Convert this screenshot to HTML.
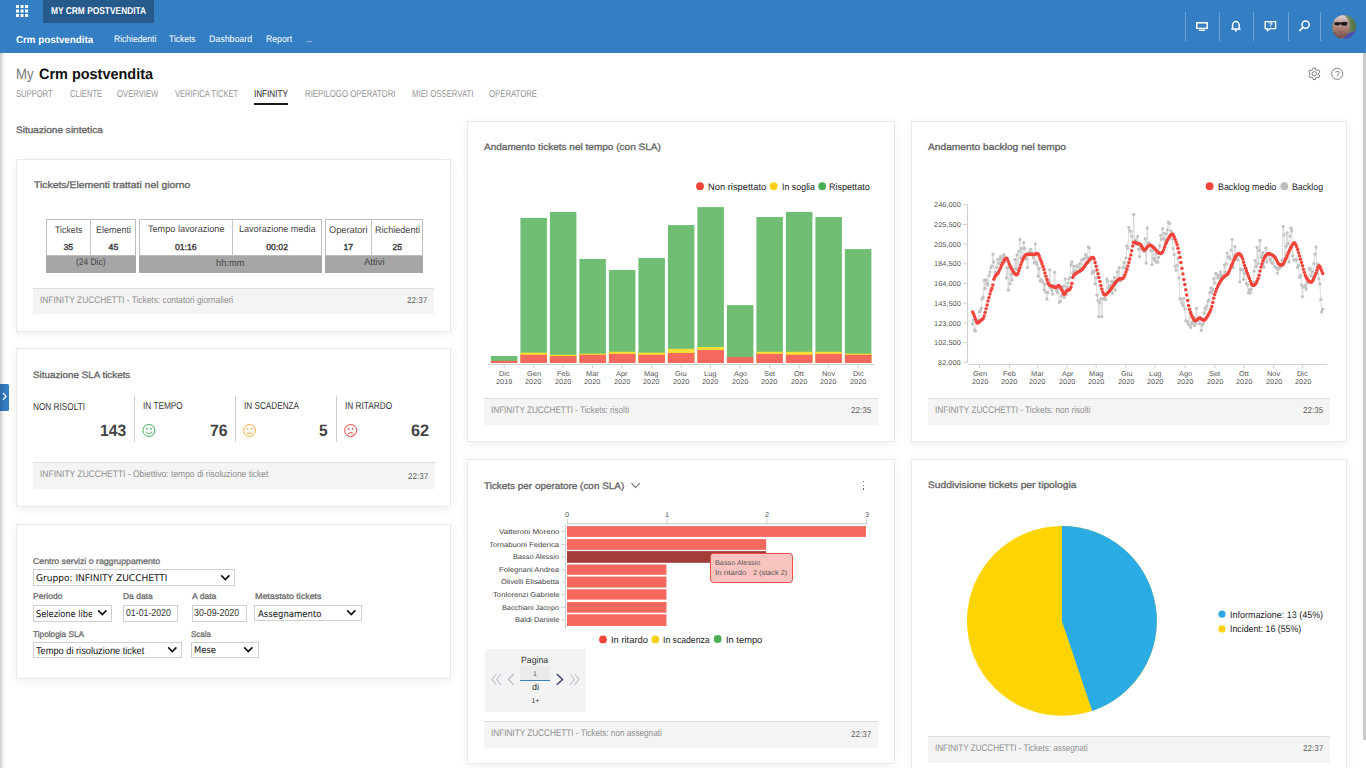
<!DOCTYPE html>
<html lang="it"><head><meta charset="utf-8"><title>My Crm postvendita</title>
<style>
html,body{margin:0;padding:0;width:1366px;height:768px;overflow:hidden;background:#fff}
body{position:relative;font-family:"Liberation Sans",sans-serif;text-rendering:geometricPrecision}
.b{position:absolute;display:block}
.t{position:absolute;white-space:pre;transform-origin:0 50%;display:block}
</style></head><body>
<div class="b" style="left:0.00px;top:0.00px;width:1366.00px;height:53.00px;background:#347ec3;"></div>
<div class="b" style="left:43.00px;top:0.00px;width:111.00px;height:23.00px;background:#265a8b;"></div>
<svg class="b" style="left:14px;top:3px" width="18" height="18" viewBox="14 3 18 18" fill="#fff"><rect x="16.00" y="5.00" width="3" height="3.05"/><rect x="16.00" y="9.50" width="3" height="3.05"/><rect x="16.00" y="14.00" width="3" height="3.05"/><rect x="20.55" y="5.00" width="3" height="3.05"/><rect x="20.55" y="9.50" width="3" height="3.05"/><rect x="20.55" y="14.00" width="3" height="3.05"/><rect x="25.10" y="5.00" width="3" height="3.05"/><rect x="25.10" y="9.50" width="3" height="3.05"/><rect x="25.10" y="14.00" width="3" height="3.05"/></svg>
<span class="t" style="left:50.80px;top:4.00px;height:15px;line-height:15px;font-size:10px;color:#fff;font-weight:700;transform:scaleX(0.8377);">MY CRM POSTVENDITA</span>
<span class="t" style="left:16.10px;top:33.00px;height:15px;line-height:15px;font-size:10px;color:#fff;font-weight:700;transform:scaleX(0.9771);">Crm postvendita</span>
<span class="t" style="left:113.70px;top:33.00px;height:14px;line-height:14px;font-size:9.5px;color:#fff;transform:scaleX(0.9000);">Richiedenti</span>
<span class="t" style="left:169.30px;top:33.00px;height:14px;line-height:14px;font-size:9.5px;color:#fff;transform:scaleX(0.8946);">Tickets</span>
<span class="t" style="left:209.00px;top:33.00px;height:14px;line-height:14px;font-size:9.5px;color:#fff;transform:scaleX(0.9272);">Dashboard</span>
<span class="t" style="left:265.80px;top:33.00px;height:14px;line-height:14px;font-size:9.5px;color:#fff;transform:scaleX(0.9153);">Report</span>
<span class="t" style="left:305.60px;top:33.00px;height:14px;line-height:14px;font-size:9.5px;color:#fff;transform:scaleX(0.7574);">...</span>
<span class="t" style="left:16.40px;top:64.00px;height:21px;line-height:21px;font-size:15px;color:#787878;transform:scaleX(0.8800);">My</span>
<span class="t" style="left:39.10px;top:64.00px;height:21px;line-height:21px;font-size:15px;color:#111;font-weight:700;transform:scaleX(0.9632);">Crm postvendita</span>
<span class="t" style="left:16.40px;top:87.00px;height:15px;line-height:15px;font-size:10px;color:#949494;transform:scaleX(0.7598);">SUPPORT</span>
<span class="t" style="left:69.70px;top:87.00px;height:15px;line-height:15px;font-size:10px;color:#949494;transform:scaleX(0.7624);">CLIENTE</span>
<span class="t" style="left:117.40px;top:87.00px;height:15px;line-height:15px;font-size:10px;color:#949494;transform:scaleX(0.7707);">OVERVIEW</span>
<span class="t" style="left:174.60px;top:87.00px;height:15px;line-height:15px;font-size:10px;color:#949494;transform:scaleX(0.7548);">VERIFICA TICKET</span>
<span class="t" style="left:254.20px;top:87.00px;height:15px;line-height:15px;font-size:10px;color:#222;transform:scaleX(0.8111);">INFINITY</span>
<span class="t" style="left:304.50px;top:87.00px;height:15px;line-height:15px;font-size:10px;color:#949494;transform:scaleX(0.7816);">RIEPILOGO OPERATORI</span>
<span class="t" style="left:411.50px;top:87.00px;height:15px;line-height:15px;font-size:10px;color:#949494;transform:scaleX(0.7794);">MIEI OSSERVATI</span>
<span class="t" style="left:489.00px;top:87.00px;height:15px;line-height:15px;font-size:10px;color:#949494;transform:scaleX(0.7758);">OPERATORE</span>
<div class="b" style="left:254.00px;top:102.60px;width:34.20px;height:2.00px;background:#1a1a1a;"></div>
<span class="t" style="left:16.40px;top:123.00px;height:14px;line-height:14px;font-size:9.3px;color:#666;-webkit-text-stroke:0.32px currentColor;transform:scaleX(1.0835);">Situazione sintetica</span>
<div class="b" style="left:1363.00px;top:53.00px;width:3.00px;height:687.00px;background:#cbcbcb;"></div>
<div class="b" style="left:0;top:53px;width:6px;height:715px;background:linear-gradient(to right,#c6c6c6 0,#e2e2e2 30%,#f6f6f6 65%,#fff 100%)"></div>
<div class="b" style="left:0;top:383.6px;width:8.8px;height:27.1px;border-radius:0 1.5px 1.5px 0;background:linear-gradient(to right,#2b6aab,#347ec3 70%)"></div>
<svg class="b" style="left:1px;top:391px" width="7" height="11" viewBox="0 0 7 11"><path d="M2 2 L5 5.4 L2 8.8" fill="none" stroke="#fff" stroke-width="1.25"/></svg>
<div class="b" style="left:16.00px;top:159.00px;width:435.00px;height:172.50px;background:#fff;border:1px solid #e9e9e9;box-shadow:0 2px 9px rgba(0,0,0,.065);box-sizing:border-box"></div>
<span class="t" style="left:33.50px;top:178.00px;height:14px;line-height:14px;font-size:9.3px;color:#666;-webkit-text-stroke:0.32px currentColor;transform:scaleX(1.1189);">Tickets/Elementi trattati nel giorno</span>
<div class="b" style="left:46.00px;top:219.00px;width:90.20px;height:37.00px;background:#fff;border:1px solid #bdbdbd;box-sizing:border-box"></div>
<div class="b" style="left:90.10px;top:219.00px;width:1.00px;height:37.00px;background:#c4c4c4;"></div>
<div class="b" style="left:46.00px;top:255.50px;width:90.20px;height:17.00px;background:#a6a6a6;"></div>
<span class="t" style="left:54.55px;top:224.00px;height:14px;line-height:14px;font-size:9.5px;color:#444;transform:scaleX(0.9249);">Tickets</span>
<span class="t" style="left:95.90px;top:224.00px;height:14px;line-height:14px;font-size:9.5px;color:#444;transform:scaleX(0.9467);">Elementi</span>
<span class="t" style="left:63.48px;top:241.00px;height:13px;line-height:13px;font-size:8.66px;color:#3c3c3c;-webkit-text-stroke:0.38px currentColor;">35</span>
<span class="t" style="left:108.58px;top:241.00px;height:13px;line-height:13px;font-size:8.66px;color:#3c3c3c;-webkit-text-stroke:0.38px currentColor;">45</span>
<span class="t" style="left:76.35px;top:256.00px;height:14px;line-height:14px;font-size:9.5px;color:#444;transform:scaleX(0.8868);">(24 Dic)</span>
<div class="b" style="left:139.00px;top:219.00px;width:182.80px;height:37.00px;background:#fff;border:1px solid #bdbdbd;box-sizing:border-box"></div>
<div class="b" style="left:232.00px;top:219.00px;width:1.00px;height:37.00px;background:#c4c4c4;"></div>
<div class="b" style="left:139.00px;top:255.50px;width:182.80px;height:17.00px;background:#a6a6a6;"></div>
<span class="t" style="left:147.50px;top:223.00px;height:14px;line-height:14px;font-size:9.5px;color:#444;transform:scaleX(0.9592);">Tempo lavorazione</span>
<span class="t" style="left:238.90px;top:223.00px;height:14px;line-height:14px;font-size:9.5px;color:#444;transform:scaleX(0.9529);">Lavorazione media</span>
<span class="t" style="left:174.91px;top:241.00px;height:13px;line-height:13px;font-size:8.66px;color:#3c3c3c;-webkit-text-stroke:0.38px currentColor;">01:16</span>
<span class="t" style="left:266.31px;top:241.00px;height:13px;line-height:13px;font-size:8.66px;color:#3c3c3c;-webkit-text-stroke:0.38px currentColor;">00:02</span>
<span class="t" style="left:216.15px;top:257.00px;height:14px;line-height:14px;font-size:9.5px;color:#444;transform:scaleX(0.9812);">hh:mm</span>
<div class="b" style="left:325.20px;top:219.00px;width:97.80px;height:37.00px;background:#fff;border:1px solid #bdbdbd;box-sizing:border-box"></div>
<div class="b" style="left:371.00px;top:219.00px;width:1.00px;height:37.00px;background:#c4c4c4;"></div>
<div class="b" style="left:325.20px;top:255.50px;width:97.80px;height:17.00px;background:#a6a6a6;"></div>
<span class="t" style="left:329.10px;top:224.00px;height:14px;line-height:14px;font-size:9.5px;color:#444;transform:scaleX(0.9720);">Operatori</span>
<span class="t" style="left:374.75px;top:224.00px;height:14px;line-height:14px;font-size:9.5px;color:#444;transform:scaleX(0.9574);">Richiedenti</span>
<span class="t" style="left:343.53px;top:241.00px;height:13px;line-height:13px;font-size:8.66px;color:#3c3c3c;-webkit-text-stroke:0.38px currentColor;">17</span>
<span class="t" style="left:392.43px;top:241.00px;height:13px;line-height:13px;font-size:8.66px;color:#3c3c3c;-webkit-text-stroke:0.38px currentColor;">25</span>
<span class="t" style="left:363.85px;top:256.00px;height:14px;line-height:14px;font-size:9.5px;color:#444;transform:scaleX(0.9954);">Attivi</span>
<div class="b" style="left:33.00px;top:288.00px;width:401.00px;height:25.80px;background:#f4f4f4;border-top:1px solid #dcdcdc;box-sizing:border-box"></div>
<span class="t" style="left:40.00px;top:294.00px;height:14px;line-height:14px;font-size:9.5px;color:#8f8f8f;transform:scaleX(0.8804);">INFINITY ZUCCHETTI - Tickets: contatori giornalieri</span>
<span class="t" style="left:406.90px;top:294.00px;height:13px;line-height:13px;font-size:8.5px;color:#5a5a5a;transform:scaleX(0.9492);">22:37</span>
<div class="b" style="left:16.00px;top:348.00px;width:435.00px;height:158.50px;background:#fff;border:1px solid #e9e9e9;box-shadow:0 2px 9px rgba(0,0,0,.065);box-sizing:border-box"></div>
<span class="t" style="left:33.20px;top:368.00px;height:14px;line-height:14px;font-size:9.3px;color:#666;-webkit-text-stroke:0.32px currentColor;transform:scaleX(1.0576);">Situazione SLA tickets</span>
<span class="t" style="left:33.20px;top:400.00px;height:15px;line-height:15px;font-size:10px;color:#333;transform:scaleX(0.8249);">NON RISOLTI</span>
<span class="t" style="left:143.40px;top:399.00px;height:15px;line-height:15px;font-size:10px;color:#333;transform:scaleX(0.8244);">IN TEMPO</span>
<span class="t" style="left:243.70px;top:399.00px;height:15px;line-height:15px;font-size:10px;color:#333;transform:scaleX(0.8180);">IN SCADENZA</span>
<span class="t" style="left:344.60px;top:399.00px;height:15px;line-height:15px;font-size:10px;color:#333;transform:scaleX(0.8274);">IN RITARDO</span>
<span class="t" style="left:99.90px;top:420.00px;height:23px;line-height:23px;font-size:16.5px;color:#444;font-weight:700;transform:scaleX(0.9516);">143</span>
<span class="t" style="left:209.60px;top:420.00px;height:23px;line-height:23px;font-size:16.5px;color:#444;font-weight:700;transform:scaleX(0.9586);">76</span>
<span class="t" style="left:319.30px;top:420.00px;height:23px;line-height:23px;font-size:16.5px;color:#444;font-weight:700;transform:scaleX(0.9361);">5</span>
<span class="t" style="left:410.80px;top:420.00px;height:23px;line-height:23px;font-size:16.5px;color:#444;font-weight:700;transform:scaleX(0.9913);">62</span>
<div class="b" style="left:134.00px;top:396.00px;width:1.00px;height:45.60px;background:#cfcfcf;"></div>
<div class="b" style="left:234.90px;top:396.00px;width:1.00px;height:45.60px;background:#cfcfcf;"></div>
<div class="b" style="left:336.10px;top:396.00px;width:1.00px;height:45.60px;background:#cfcfcf;"></div>
<svg class="b" style="left:0;top:0" width="460" height="520" viewBox="0 0 460 520"><g fill="none" stroke="#43a95a" stroke-width="1"><circle cx="148.9" cy="430.5" r="6.0"/><path d="M145.7 431.8 Q148.9 435.9 152.1 431.8" /></g><circle cx="146.8" cy="428.8" r="0.85" fill="#43a95a"/><circle cx="151.0" cy="428.8" r="0.85" fill="#43a95a"/><g fill="none" stroke="#fbab38" stroke-width="1"><circle cx="249.5" cy="430.5" r="6.0"/><path d="M246.7 433.1 H252.3" /></g><circle cx="247.4" cy="428.8" r="0.85" fill="#fbab38"/><circle cx="251.6" cy="428.8" r="0.85" fill="#fbab38"/><g fill="none" stroke="#f0473e" stroke-width="1"><circle cx="350.7" cy="430.5" r="6.0"/><path d="M347.7 434.3 Q350.7 430.7 353.7 434.3" /></g><circle cx="348.6" cy="428.8" r="0.85" fill="#f0473e"/><circle cx="352.8" cy="428.8" r="0.85" fill="#f0473e"/></svg>
<div class="b" style="left:33.00px;top:462.00px;width:402.00px;height:26.70px;background:#f4f4f4;border-top:1px solid #dcdcdc;box-sizing:border-box"></div>
<span class="t" style="left:40.00px;top:468.00px;height:14px;line-height:14px;font-size:9.5px;color:#8f8f8f;transform:scaleX(0.8908);">INFINITY ZUCCHETTI - Obiettivo: tempo di risoluzione ticket</span>
<span class="t" style="left:407.90px;top:470.00px;height:13px;line-height:13px;font-size:8.5px;color:#5a5a5a;transform:scaleX(0.9492);">22:37</span>
<div class="b" style="left:16.00px;top:523.50px;width:435.00px;height:155.00px;background:#fff;border:1px solid #e9e9e9;box-shadow:0 2px 9px rgba(0,0,0,.065);box-sizing:border-box"></div>
<span class="t" style="left:33.10px;top:555.00px;height:13px;line-height:13px;font-size:8.3px;color:#707070;-webkit-text-stroke:0.32px currentColor;transform:scaleX(1.0511);">Centro servizi o raggruppamento</span>
<div class="b" style="left:33.00px;top:569.40px;width:201.80px;height:16.40px;background:#fff;border:1px solid #cfcfcf;box-sizing:border-box"></div>
<span class="t" style="left:36.30px;top:572.00px;height:14px;line-height:14px;font-size:9.3px;color:#111;font-family:'DejaVu Sans', 'Liberation Sans', sans-serif;transform:scaleX(0.9723);">Gruppo: INFINITY ZUCCHETTI</span>
<svg class="b" style="left:219.60px;top:573.60px" width="11" height="8" viewBox="0 0 11 8"><path d="M1.2 1.4 L5.3 5.5 L9.4 1.4" fill="none" stroke="#111" stroke-width="1.7"/></svg>
<span class="t" style="left:33.10px;top:590.00px;height:13px;line-height:13px;font-size:8.3px;color:#707070;-webkit-text-stroke:0.32px currentColor;transform:scaleX(1.0311);">Periodo</span>
<span class="t" style="left:123.20px;top:590.00px;height:13px;line-height:13px;font-size:8.3px;color:#707070;-webkit-text-stroke:0.32px currentColor;transform:scaleX(1.0219);">Da data</span>
<span class="t" style="left:191.70px;top:590.00px;height:13px;line-height:13px;font-size:8.3px;color:#707070;-webkit-text-stroke:0.32px currentColor;transform:scaleX(1.0369);">A data</span>
<span class="t" style="left:254.60px;top:590.00px;height:13px;line-height:13px;font-size:8.3px;color:#707070;-webkit-text-stroke:0.32px currentColor;transform:scaleX(1.0680);">Metastato tickets</span>
<div class="b" style="left:33.00px;top:605.20px;width:78.90px;height:16.40px;background:#fff;border:1px solid #cfcfcf;box-sizing:border-box"></div>
<span class="t" style="left:36.30px;top:608.00px;height:14px;line-height:14px;font-size:9.3px;color:#111;font-family:'DejaVu Sans', 'Liberation Sans', sans-serif;transform:scaleX(0.8861);clip-path:inset(0 1px 0 0);">Selezione libe</span>
<svg class="b" style="left:96.60px;top:609.40px" width="11" height="8" viewBox="0 0 11 8"><path d="M1.2 1.4 L5.3 5.5 L9.4 1.4" fill="none" stroke="#111" stroke-width="1.7"/></svg>
<div class="b" style="left:123.20px;top:605.20px;width:54.70px;height:16.40px;background:#fff;border:1px solid #cfcfcf;box-sizing:border-box"></div>
<span class="t" style="left:125.60px;top:606.00px;height:15px;line-height:15px;font-size:10px;color:#333;transform:scaleX(0.8757);">01-01-2020</span>
<div class="b" style="left:192.00px;top:605.20px;width:54.60px;height:16.40px;background:#fff;border:1px solid #cfcfcf;box-sizing:border-box"></div>
<span class="t" style="left:194.30px;top:606.00px;height:15px;line-height:15px;font-size:10px;color:#333;transform:scaleX(0.8816);">30-09-2020</span>
<div class="b" style="left:254.20px;top:605.20px;width:107.60px;height:16.30px;background:#fff;border:1px solid #cfcfcf;box-sizing:border-box"></div>
<span class="t" style="left:257.50px;top:608.00px;height:14px;line-height:14px;font-size:9.3px;color:#111;font-family:'DejaVu Sans', 'Liberation Sans', sans-serif;transform:scaleX(0.9182);">Assegnamento</span>
<svg class="b" style="left:346.40px;top:609.40px" width="11" height="8" viewBox="0 0 11 8"><path d="M1.2 1.4 L5.3 5.5 L9.4 1.4" fill="none" stroke="#111" stroke-width="1.7"/></svg>
<span class="t" style="left:33.10px;top:628.00px;height:13px;line-height:13px;font-size:8.3px;color:#707070;-webkit-text-stroke:0.32px currentColor;transform:scaleX(0.9930);">Tipologia SLA</span>
<span class="t" style="left:191.20px;top:628.00px;height:13px;line-height:13px;font-size:8.3px;color:#707070;-webkit-text-stroke:0.32px currentColor;transform:scaleX(0.9535);">Scala</span>
<div class="b" style="left:33.00px;top:642.20px;width:148.70px;height:15.40px;background:#fff;border:1px solid #cfcfcf;box-sizing:border-box"></div>
<span class="t" style="left:36.30px;top:644.00px;height:15px;line-height:15px;font-size:10px;color:#111;transform:scaleX(0.9234);">Tempo di risoluzione ticket</span>
<svg class="b" style="left:166.50px;top:646.00px" width="11" height="8" viewBox="0 0 11 8"><path d="M1.2 1.4 L5.3 5.5 L9.4 1.4" fill="none" stroke="#111" stroke-width="1.7"/></svg>
<div class="b" style="left:191.00px;top:642.20px;width:67.70px;height:15.40px;background:#fff;border:1px solid #cfcfcf;box-sizing:border-box"></div>
<span class="t" style="left:194.30px;top:644.00px;height:14px;line-height:14px;font-size:9.3px;color:#111;font-family:'DejaVu Sans', 'Liberation Sans', sans-serif;transform:scaleX(0.9008);">Mese</span>
<svg class="b" style="left:243.40px;top:646.00px" width="11" height="8" viewBox="0 0 11 8"><path d="M1.2 1.4 L5.3 5.5 L9.4 1.4" fill="none" stroke="#111" stroke-width="1.7"/></svg>
<div class="b" style="left:467.00px;top:121.00px;width:428.00px;height:320.50px;background:#fff;border:1px solid #e9e9e9;box-shadow:0 2px 9px rgba(0,0,0,.065);box-sizing:border-box"></div>
<span class="t" style="left:484.00px;top:140.00px;height:14px;line-height:14px;font-size:9.3px;color:#666;-webkit-text-stroke:0.32px currentColor;transform:scaleX(1.0793);">Andamento tickets nel tempo (con SLA)</span>
<svg class="b" style="left:467px;top:121px" width="428" height="321" viewBox="467 121 428 321"><circle cx="700.0" cy="186.2" r="3.9" fill="#f1433a"/><circle cx="773.7" cy="186.2" r="3.9" fill="#fdd017"/><circle cx="822.2" cy="186.2" r="3.9" fill="#4cae52"/><path d="M488 364.5 H874.5" stroke="#cfcfcf" stroke-width="1.1" fill="none"/><rect x="490.90" y="356.00" width="26.5" height="7.00" fill="#70be74"/><rect x="490.90" y="360.80" width="26.5" height="2.20" fill="#f4685d"/><path d="M504.15 364.5 V368" stroke="#cfcfcf" stroke-width="1"/><rect x="520.40" y="217.90" width="26.5" height="145.10" fill="#70be74"/><rect x="520.40" y="352.70" width="26.5" height="10.30" fill="#fedf33"/><rect x="520.40" y="354.80" width="26.5" height="8.20" fill="#f4685d"/><path d="M533.65 364.5 V368" stroke="#cfcfcf" stroke-width="1"/><rect x="549.90" y="211.90" width="26.5" height="151.10" fill="#70be74"/><rect x="549.90" y="354.80" width="26.5" height="8.20" fill="#fedf33"/><rect x="549.90" y="356.00" width="26.5" height="7.00" fill="#f4685d"/><path d="M563.15 364.5 V368" stroke="#cfcfcf" stroke-width="1"/><rect x="579.40" y="259.00" width="26.5" height="104.00" fill="#70be74"/><rect x="579.40" y="353.60" width="26.5" height="9.40" fill="#fedf33"/><rect x="579.40" y="354.80" width="26.5" height="8.20" fill="#f4685d"/><path d="M592.65 364.5 V368" stroke="#cfcfcf" stroke-width="1"/><rect x="608.90" y="270.00" width="26.5" height="93.00" fill="#70be74"/><rect x="608.90" y="351.80" width="26.5" height="11.20" fill="#fedf33"/><rect x="608.90" y="353.90" width="26.5" height="9.10" fill="#f4685d"/><path d="M622.15 364.5 V368" stroke="#cfcfcf" stroke-width="1"/><rect x="638.40" y="258.00" width="26.5" height="105.00" fill="#70be74"/><rect x="638.40" y="352.70" width="26.5" height="10.30" fill="#fedf33"/><rect x="638.40" y="354.80" width="26.5" height="8.20" fill="#f4685d"/><path d="M651.65 364.5 V368" stroke="#cfcfcf" stroke-width="1"/><rect x="667.90" y="225.10" width="26.5" height="137.90" fill="#70be74"/><rect x="667.90" y="348.80" width="26.5" height="14.20" fill="#fedf33"/><rect x="667.90" y="353.00" width="26.5" height="10.00" fill="#f4685d"/><path d="M681.15 364.5 V368" stroke="#cfcfcf" stroke-width="1"/><rect x="697.40" y="207.10" width="26.5" height="155.90" fill="#70be74"/><rect x="697.40" y="347.00" width="26.5" height="16.00" fill="#fedf33"/><rect x="697.40" y="350.00" width="26.5" height="13.00" fill="#f4685d"/><path d="M710.65 364.5 V368" stroke="#cfcfcf" stroke-width="1"/><rect x="726.90" y="305.10" width="26.5" height="57.90" fill="#70be74"/><rect x="726.90" y="357.20" width="26.5" height="5.80" fill="#f4685d"/><path d="M740.15 364.5 V368" stroke="#cfcfcf" stroke-width="1"/><rect x="756.40" y="217.00" width="26.5" height="146.00" fill="#70be74"/><rect x="756.40" y="351.80" width="26.5" height="11.20" fill="#fedf33"/><rect x="756.40" y="353.90" width="26.5" height="9.10" fill="#f4685d"/><path d="M769.65 364.5 V368" stroke="#cfcfcf" stroke-width="1"/><rect x="785.90" y="211.90" width="26.5" height="151.10" fill="#70be74"/><rect x="785.90" y="351.80" width="26.5" height="11.20" fill="#fedf33"/><rect x="785.90" y="354.80" width="26.5" height="8.20" fill="#f4685d"/><path d="M799.15 364.5 V368" stroke="#cfcfcf" stroke-width="1"/><rect x="815.40" y="217.00" width="26.5" height="146.00" fill="#70be74"/><rect x="815.40" y="351.80" width="26.5" height="11.20" fill="#fedf33"/><rect x="815.40" y="353.90" width="26.5" height="9.10" fill="#f4685d"/><path d="M828.65 364.5 V368" stroke="#cfcfcf" stroke-width="1"/><rect x="844.90" y="249.10" width="26.5" height="113.90" fill="#70be74"/><rect x="844.90" y="353.60" width="26.5" height="9.40" fill="#fedf33"/><rect x="844.90" y="354.80" width="26.5" height="8.20" fill="#f4685d"/><path d="M858.15 364.5 V368" stroke="#cfcfcf" stroke-width="1"/></svg>
<span class="t" style="left:498.78px;top:369.00px;height:11px;line-height:11px;font-size:7px;color:#555;transform:scaleX(1.0600);">Dic</span>
<span class="t" style="left:495.97px;top:377.00px;height:11px;line-height:11px;font-size:7px;color:#555;transform:scaleX(1.0500);">2019</span>
<span class="t" style="left:526.64px;top:369.00px;height:11px;line-height:11px;font-size:7px;color:#555;transform:scaleX(1.0600);">Gen</span>
<span class="t" style="left:525.47px;top:377.00px;height:11px;line-height:11px;font-size:7px;color:#555;transform:scaleX(1.0500);">2020</span>
<span class="t" style="left:556.76px;top:369.00px;height:11px;line-height:11px;font-size:7px;color:#555;transform:scaleX(1.0600);">Feb</span>
<span class="t" style="left:554.97px;top:377.00px;height:11px;line-height:11px;font-size:7px;color:#555;transform:scaleX(1.0500);">2020</span>
<span class="t" style="left:586.26px;top:369.00px;height:11px;line-height:11px;font-size:7px;color:#555;transform:scaleX(1.0600);">Mar</span>
<span class="t" style="left:584.47px;top:377.00px;height:11px;line-height:11px;font-size:7px;color:#555;transform:scaleX(1.0500);">2020</span>
<span class="t" style="left:616.37px;top:369.00px;height:11px;line-height:11px;font-size:7px;color:#555;transform:scaleX(1.0600);">Apr</span>
<span class="t" style="left:613.97px;top:377.00px;height:11px;line-height:11px;font-size:7px;color:#555;transform:scaleX(1.0500);">2020</span>
<span class="t" style="left:644.43px;top:369.00px;height:11px;line-height:11px;font-size:7px;color:#555;transform:scaleX(1.0600);">Mag</span>
<span class="t" style="left:643.47px;top:377.00px;height:11px;line-height:11px;font-size:7px;color:#555;transform:scaleX(1.0500);">2020</span>
<span class="t" style="left:675.37px;top:369.00px;height:11px;line-height:11px;font-size:7px;color:#555;transform:scaleX(1.0600);">Giu</span>
<span class="t" style="left:672.97px;top:377.00px;height:11px;line-height:11px;font-size:7px;color:#555;transform:scaleX(1.0500);">2020</span>
<span class="t" style="left:704.46px;top:369.00px;height:11px;line-height:11px;font-size:7px;color:#555;transform:scaleX(1.0600);">Lug</span>
<span class="t" style="left:702.47px;top:377.00px;height:11px;line-height:11px;font-size:7px;color:#555;transform:scaleX(1.0500);">2020</span>
<span class="t" style="left:733.54px;top:369.00px;height:11px;line-height:11px;font-size:7px;color:#555;transform:scaleX(1.0600);">Ago</span>
<span class="t" style="left:731.97px;top:377.00px;height:11px;line-height:11px;font-size:7px;color:#555;transform:scaleX(1.0500);">2020</span>
<span class="t" style="left:764.08px;top:369.00px;height:11px;line-height:11px;font-size:7px;color:#555;transform:scaleX(1.0600);">Set</span>
<span class="t" style="left:761.47px;top:377.00px;height:11px;line-height:11px;font-size:7px;color:#555;transform:scaleX(1.0500);">2020</span>
<span class="t" style="left:794.20px;top:369.00px;height:11px;line-height:11px;font-size:7px;color:#555;transform:scaleX(1.0600);">Ott</span>
<span class="t" style="left:790.97px;top:377.00px;height:11px;line-height:11px;font-size:7px;color:#555;transform:scaleX(1.0500);">2020</span>
<span class="t" style="left:822.05px;top:369.00px;height:11px;line-height:11px;font-size:7px;color:#555;transform:scaleX(1.0600);">Nov</span>
<span class="t" style="left:820.47px;top:377.00px;height:11px;line-height:11px;font-size:7px;color:#555;transform:scaleX(1.0500);">2020</span>
<span class="t" style="left:852.78px;top:369.00px;height:11px;line-height:11px;font-size:7px;color:#555;transform:scaleX(1.0600);">Dic</span>
<span class="t" style="left:849.97px;top:377.00px;height:11px;line-height:11px;font-size:7px;color:#555;transform:scaleX(1.0500);">2020</span>
<span class="t" style="left:708.30px;top:181.00px;height:14px;line-height:14px;font-size:9.5px;color:#222;transform:scaleX(0.9838);">Non rispettato</span>
<span class="t" style="left:782.00px;top:181.00px;height:14px;line-height:14px;font-size:9.5px;color:#222;transform:scaleX(0.9325);">In soglia</span>
<span class="t" style="left:829.40px;top:181.00px;height:14px;line-height:14px;font-size:9.5px;color:#222;transform:scaleX(0.9514);">Rispettato</span>
<div class="b" style="left:484.00px;top:398.00px;width:394.00px;height:26.70px;background:#f4f4f4;border-top:1px solid #dcdcdc;box-sizing:border-box"></div>
<span class="t" style="left:491.00px;top:404.00px;height:14px;line-height:14px;font-size:9.5px;color:#8f8f8f;transform:scaleX(0.8553);">INFINITY ZUCCHETTI - Tickets: risolti</span>
<span class="t" style="left:850.90px;top:404.00px;height:13px;line-height:13px;font-size:8.5px;color:#5a5a5a;transform:scaleX(0.9492);">22:35</span>
<div class="b" style="left:911.00px;top:121.00px;width:436.00px;height:320.50px;background:#fff;border:1px solid #e9e9e9;box-shadow:0 2px 9px rgba(0,0,0,.065);box-sizing:border-box"></div>
<span class="t" style="left:928.00px;top:140.00px;height:14px;line-height:14px;font-size:9.3px;color:#666;-webkit-text-stroke:0.32px currentColor;transform:scaleX(1.0988);">Andamento backlog nel tempo</span>
<svg class="b" style="left:911px;top:121px" width="436" height="321" viewBox="911 121 436 321"><circle cx="1209.6" cy="186.2" r="3.9" fill="#f1433a"/><circle cx="1284.3" cy="186.2" r="3.9" fill="#bdbdbd"/><path d="M967.5 204.2 V362.8 M969 364.5 H1327" stroke="#cfcfcf" stroke-width="1.1" fill="none"/><path d="M963 204.70 H967.5" stroke="#cfcfcf" stroke-width="1"/><path d="M963 224.39 H967.5" stroke="#cfcfcf" stroke-width="1"/><path d="M963 244.08 H967.5" stroke="#cfcfcf" stroke-width="1"/><path d="M963 263.77 H967.5" stroke="#cfcfcf" stroke-width="1"/><path d="M963 283.46 H967.5" stroke="#cfcfcf" stroke-width="1"/><path d="M963 303.15 H967.5" stroke="#cfcfcf" stroke-width="1"/><path d="M963 322.84 H967.5" stroke="#cfcfcf" stroke-width="1"/><path d="M963 342.53 H967.5" stroke="#cfcfcf" stroke-width="1"/><path d="M963 362.22 H967.5" stroke="#cfcfcf" stroke-width="1"/><path d="M979.50 364.5 V368" stroke="#cfcfcf" stroke-width="1"/><path d="M1009.40 364.5 V368" stroke="#cfcfcf" stroke-width="1"/><path d="M1037.37 364.5 V368" stroke="#cfcfcf" stroke-width="1"/><path d="M1067.27 364.5 V368" stroke="#cfcfcf" stroke-width="1"/><path d="M1096.20 364.5 V368" stroke="#cfcfcf" stroke-width="1"/><path d="M1126.10 364.5 V368" stroke="#cfcfcf" stroke-width="1"/><path d="M1155.04 364.5 V368" stroke="#cfcfcf" stroke-width="1"/><path d="M1184.94 364.5 V368" stroke="#cfcfcf" stroke-width="1"/><path d="M1214.84 364.5 V368" stroke="#cfcfcf" stroke-width="1"/><path d="M1243.77 364.5 V368" stroke="#cfcfcf" stroke-width="1"/><path d="M1273.67 364.5 V368" stroke="#cfcfcf" stroke-width="1"/><path d="M1302.61 364.5 V368" stroke="#cfcfcf" stroke-width="1"/><path d="M972.6 323.9 L973.6 319.9 L974.5 330.0 L975.5 331.0 L976.5 320.6 L977.4 320.0 L978.4 320.7 L979.4 311.9 L980.3 311.0 L981.3 308.3 L982.2 298.8 L983.2 296.8 L984.2 280.1 L985.1 288.7 L986.1 280.0 L987.1 283.2 L988.0 285.1 L989.0 275.7 L990.0 272.1 L990.9 267.8 L991.9 266.2 L992.9 254.0 L993.8 262.0 L994.8 277.4 L995.7 272.5 L996.7 267.5 L997.7 259.3 L998.6 263.5 L999.6 259.5 L1000.6 256.7 L1001.5 262.3 L1002.5 258.2 L1003.5 254.7 L1004.4 255.7 L1005.4 257.9 L1006.4 277.8 L1007.3 267.8 L1008.3 290.0 L1009.3 267.2 L1010.2 283.8 L1011.2 274.3 L1012.1 280.1 L1013.1 269.5 L1014.1 271.8 L1015.0 259.3 L1016.0 268.5 L1017.0 254.8 L1017.9 269.7 L1018.9 251.3 L1019.9 239.5 L1020.8 258.0 L1021.8 248.4 L1022.8 259.5 L1023.7 242.7 L1024.7 248.4 L1025.6 256.0 L1026.6 258.9 L1027.6 267.6 L1028.5 252.7 L1029.5 253.3 L1030.5 249.1 L1031.4 252.0 L1032.4 253.3 L1033.4 257.6 L1034.3 263.0 L1035.3 243.8 L1036.3 262.3 L1037.2 265.0 L1038.2 276.3 L1039.2 268.5 L1040.1 281.0 L1041.1 279.8 L1042.0 281.0 L1043.0 282.1 L1044.0 289.9 L1044.9 284.5 L1045.9 292.3 L1046.9 299.2 L1047.8 292.7 L1048.8 280.4 L1049.8 269.9 L1050.7 287.7 L1051.7 290.5 L1052.7 294.1 L1053.6 285.6 L1054.6 272.4 L1055.5 286.6 L1056.5 290.5 L1057.5 292.8 L1058.4 287.5 L1059.4 302.2 L1060.4 301.2 L1061.3 295.8 L1062.3 287.1 L1063.3 286.2 L1064.2 297.5 L1065.2 278.9 L1066.2 294.3 L1067.1 286.8 L1068.1 282.9 L1069.0 278.8 L1070.0 277.5 L1071.0 265.0 L1071.9 262.0 L1072.9 273.0 L1073.9 266.2 L1074.8 270.6 L1075.8 273.4 L1076.8 266.0 L1077.7 266.5 L1078.7 271.5 L1079.7 263.7 L1080.6 268.9 L1081.6 259.9 L1082.6 269.0 L1083.5 258.6 L1084.5 259.1 L1085.4 254.7 L1086.4 257.7 L1087.4 256.9 L1088.3 246.8 L1089.3 247.8 L1090.3 259.0 L1091.2 257.6 L1092.2 273.3 L1093.2 271.2 L1094.1 271.7 L1095.1 284.0 L1096.1 277.7 L1097.0 295.2 L1098.0 300.4 L1098.9 316.8 L1099.9 302.8 L1100.9 298.8 L1101.8 316.6 L1102.8 298.6 L1103.8 299.0 L1104.7 298.7 L1105.7 299.5 L1106.7 279.0 L1107.6 281.4 L1108.6 287.9 L1109.6 285.5 L1110.5 285.5 L1111.5 281.1 L1112.5 293.1 L1113.4 282.1 L1114.4 277.5 L1115.3 290.1 L1116.3 282.8 L1117.3 271.9 L1118.2 280.2 L1119.2 267.7 L1120.2 281.1 L1121.1 279.8 L1122.1 278.7 L1123.1 267.3 L1124.0 262.5 L1125.0 267.8 L1126.0 257.8 L1126.9 245.9 L1127.9 248.4 L1128.8 227.3 L1129.8 231.0 L1130.8 231.3 L1131.7 236.2 L1132.7 242.3 L1133.7 214.5 L1134.6 243.0 L1135.6 240.1 L1136.6 244.7 L1137.5 236.4 L1138.5 249.1 L1139.5 256.6 L1140.4 248.9 L1141.4 246.6 L1142.4 248.8 L1143.3 251.0 L1144.3 251.7 L1145.2 238.8 L1146.2 263.2 L1147.2 228.0 L1148.1 243.2 L1149.1 243.2 L1150.1 245.6 L1151.0 250.7 L1152.0 264.6 L1153.0 249.9 L1153.9 258.4 L1154.9 260.8 L1155.9 253.9 L1156.8 262.3 L1157.8 262.0 L1158.7 257.4 L1159.7 245.9 L1160.7 235.4 L1161.6 239.4 L1162.6 228.6 L1163.6 238.7 L1164.5 233.4 L1165.5 241.3 L1166.5 233.9 L1167.4 230.0 L1168.4 222.1 L1169.4 223.3 L1170.3 235.9 L1171.3 231.1 L1172.3 238.8 L1173.2 248.6 L1174.2 254.6 L1175.1 266.3 L1176.1 270.3 L1177.1 265.3 L1178.0 258.5 L1179.0 278.0 L1180.0 298.7 L1180.9 299.4 L1181.9 302.9 L1182.9 305.7 L1183.8 298.3 L1184.8 308.8 L1185.8 320.8 L1186.7 321.1 L1187.7 322.4 L1188.6 324.8 L1189.6 310.3 L1190.6 327.6 L1191.5 324.2 L1192.5 322.0 L1193.5 317.2 L1194.4 325.5 L1195.4 323.7 L1196.4 308.4 L1197.3 320.3 L1198.3 318.7 L1199.3 323.6 L1200.2 318.4 L1201.2 330.5 L1202.2 325.0 L1203.1 323.4 L1204.1 313.0 L1205.0 308.0 L1206.0 309.1 L1207.0 305.8 L1207.9 301.4 L1208.9 300.1 L1209.9 292.5 L1210.8 287.9 L1211.8 293.0 L1212.8 289.7 L1213.7 278.6 L1214.7 283.1 L1215.7 273.5 L1216.6 274.1 L1217.6 277.9 L1218.5 275.5 L1219.5 277.6 L1220.5 272.0 L1221.4 275.0 L1222.4 277.7 L1223.4 275.5 L1224.3 265.0 L1225.3 272.1 L1226.3 264.0 L1227.2 253.1 L1228.2 257.3 L1229.2 256.9 L1230.1 258.9 L1231.1 250.1 L1232.1 239.6 L1233.0 267.4 L1234.0 255.1 L1234.9 246.6 L1235.9 259.5 L1236.9 254.2 L1237.8 259.8 L1238.8 254.3 L1239.8 281.8 L1240.7 269.5 L1241.7 269.7 L1242.7 269.8 L1243.6 279.3 L1244.6 273.1 L1245.6 272.6 L1246.5 283.5 L1247.5 284.9 L1248.4 292.8 L1249.4 289.4 L1250.4 292.9 L1251.3 289.7 L1252.3 283.7 L1253.3 282.5 L1254.2 271.1 L1255.2 260.7 L1256.2 266.5 L1257.1 247.3 L1258.1 263.6 L1259.1 250.7 L1260.0 240.5 L1261.0 257.6 L1262.0 255.6 L1262.9 252.6 L1263.9 267.2 L1264.8 257.5 L1265.8 248.1 L1266.8 262.0 L1267.7 253.3 L1268.7 255.1 L1269.7 259.7 L1270.6 258.9 L1271.6 262.5 L1272.6 263.4 L1273.5 256.5 L1274.5 266.6 L1275.5 266.8 L1276.4 268.2 L1277.4 273.1 L1278.3 269.3 L1279.3 267.0 L1280.3 267.5 L1281.2 264.4 L1282.2 260.2 L1283.2 226.6 L1284.1 234.9 L1285.1 258.5 L1286.1 246.2 L1287.0 232.8 L1288.0 243.5 L1289.0 261.9 L1289.9 236.1 L1290.9 228.2 L1291.8 230.8 L1292.8 255.8 L1293.8 259.9 L1294.7 259.8 L1295.7 260.2 L1296.7 259.7 L1297.6 267.5 L1298.6 265.5 L1299.6 277.3 L1300.5 275.5 L1301.5 284.8 L1302.5 296.6 L1303.4 286.4 L1304.4 287.1 L1305.4 285.3 L1306.3 289.2 L1307.3 282.6 L1308.2 279.9 L1309.2 268.8 L1310.2 268.6 L1311.1 275.7 L1312.1 271.3 L1313.1 277.9 L1314.0 263.7 L1315.0 254.1 L1316.0 247.0 L1316.9 272.9 L1317.9 264.1 L1318.9 278.7 L1319.8 284.0 L1320.8 299.5 L1321.7 312.0 L1322.7 309.3" stroke="#d2d2d2" stroke-width="0.8" fill="none"/><g fill="#c3c3c3"><circle cx="972.6" cy="323.9" r="1.65"/><circle cx="973.6" cy="319.9" r="1.65"/><circle cx="974.5" cy="330.0" r="1.65"/><circle cx="975.5" cy="331.0" r="1.65"/><circle cx="976.5" cy="320.6" r="1.65"/><circle cx="977.4" cy="320.0" r="1.65"/><circle cx="978.4" cy="320.7" r="1.65"/><circle cx="979.4" cy="311.9" r="1.65"/><circle cx="980.3" cy="311.0" r="1.65"/><circle cx="981.3" cy="308.3" r="1.65"/><circle cx="982.2" cy="298.8" r="1.65"/><circle cx="983.2" cy="296.8" r="1.65"/><circle cx="984.2" cy="280.1" r="1.65"/><circle cx="985.1" cy="288.7" r="1.65"/><circle cx="986.1" cy="280.0" r="1.65"/><circle cx="987.1" cy="283.2" r="1.65"/><circle cx="988.0" cy="285.1" r="1.65"/><circle cx="989.0" cy="275.7" r="1.65"/><circle cx="990.0" cy="272.1" r="1.65"/><circle cx="990.9" cy="267.8" r="1.65"/><circle cx="991.9" cy="266.2" r="1.65"/><circle cx="992.9" cy="254.0" r="1.65"/><circle cx="993.8" cy="262.0" r="1.65"/><circle cx="994.8" cy="277.4" r="1.65"/><circle cx="995.7" cy="272.5" r="1.65"/><circle cx="996.7" cy="267.5" r="1.65"/><circle cx="997.7" cy="259.3" r="1.65"/><circle cx="998.6" cy="263.5" r="1.65"/><circle cx="999.6" cy="259.5" r="1.65"/><circle cx="1000.6" cy="256.7" r="1.65"/><circle cx="1001.5" cy="262.3" r="1.65"/><circle cx="1002.5" cy="258.2" r="1.65"/><circle cx="1003.5" cy="254.7" r="1.65"/><circle cx="1004.4" cy="255.7" r="1.65"/><circle cx="1005.4" cy="257.9" r="1.65"/><circle cx="1006.4" cy="277.8" r="1.65"/><circle cx="1007.3" cy="267.8" r="1.65"/><circle cx="1008.3" cy="290.0" r="1.65"/><circle cx="1009.3" cy="267.2" r="1.65"/><circle cx="1010.2" cy="283.8" r="1.65"/><circle cx="1011.2" cy="274.3" r="1.65"/><circle cx="1012.1" cy="280.1" r="1.65"/><circle cx="1013.1" cy="269.5" r="1.65"/><circle cx="1014.1" cy="271.8" r="1.65"/><circle cx="1015.0" cy="259.3" r="1.65"/><circle cx="1016.0" cy="268.5" r="1.65"/><circle cx="1017.0" cy="254.8" r="1.65"/><circle cx="1017.9" cy="269.7" r="1.65"/><circle cx="1018.9" cy="251.3" r="1.65"/><circle cx="1019.9" cy="239.5" r="1.65"/><circle cx="1020.8" cy="258.0" r="1.65"/><circle cx="1021.8" cy="248.4" r="1.65"/><circle cx="1022.8" cy="259.5" r="1.65"/><circle cx="1023.7" cy="242.7" r="1.65"/><circle cx="1024.7" cy="248.4" r="1.65"/><circle cx="1025.6" cy="256.0" r="1.65"/><circle cx="1026.6" cy="258.9" r="1.65"/><circle cx="1027.6" cy="267.6" r="1.65"/><circle cx="1028.5" cy="252.7" r="1.65"/><circle cx="1029.5" cy="253.3" r="1.65"/><circle cx="1030.5" cy="249.1" r="1.65"/><circle cx="1031.4" cy="252.0" r="1.65"/><circle cx="1032.4" cy="253.3" r="1.65"/><circle cx="1033.4" cy="257.6" r="1.65"/><circle cx="1034.3" cy="263.0" r="1.65"/><circle cx="1035.3" cy="243.8" r="1.65"/><circle cx="1036.3" cy="262.3" r="1.65"/><circle cx="1037.2" cy="265.0" r="1.65"/><circle cx="1038.2" cy="276.3" r="1.65"/><circle cx="1039.2" cy="268.5" r="1.65"/><circle cx="1040.1" cy="281.0" r="1.65"/><circle cx="1041.1" cy="279.8" r="1.65"/><circle cx="1042.0" cy="281.0" r="1.65"/><circle cx="1043.0" cy="282.1" r="1.65"/><circle cx="1044.0" cy="289.9" r="1.65"/><circle cx="1044.9" cy="284.5" r="1.65"/><circle cx="1045.9" cy="292.3" r="1.65"/><circle cx="1046.9" cy="299.2" r="1.65"/><circle cx="1047.8" cy="292.7" r="1.65"/><circle cx="1048.8" cy="280.4" r="1.65"/><circle cx="1049.8" cy="269.9" r="1.65"/><circle cx="1050.7" cy="287.7" r="1.65"/><circle cx="1051.7" cy="290.5" r="1.65"/><circle cx="1052.7" cy="294.1" r="1.65"/><circle cx="1053.6" cy="285.6" r="1.65"/><circle cx="1054.6" cy="272.4" r="1.65"/><circle cx="1055.5" cy="286.6" r="1.65"/><circle cx="1056.5" cy="290.5" r="1.65"/><circle cx="1057.5" cy="292.8" r="1.65"/><circle cx="1058.4" cy="287.5" r="1.65"/><circle cx="1059.4" cy="302.2" r="1.65"/><circle cx="1060.4" cy="301.2" r="1.65"/><circle cx="1061.3" cy="295.8" r="1.65"/><circle cx="1062.3" cy="287.1" r="1.65"/><circle cx="1063.3" cy="286.2" r="1.65"/><circle cx="1064.2" cy="297.5" r="1.65"/><circle cx="1065.2" cy="278.9" r="1.65"/><circle cx="1066.2" cy="294.3" r="1.65"/><circle cx="1067.1" cy="286.8" r="1.65"/><circle cx="1068.1" cy="282.9" r="1.65"/><circle cx="1069.0" cy="278.8" r="1.65"/><circle cx="1070.0" cy="277.5" r="1.65"/><circle cx="1071.0" cy="265.0" r="1.65"/><circle cx="1071.9" cy="262.0" r="1.65"/><circle cx="1072.9" cy="273.0" r="1.65"/><circle cx="1073.9" cy="266.2" r="1.65"/><circle cx="1074.8" cy="270.6" r="1.65"/><circle cx="1075.8" cy="273.4" r="1.65"/><circle cx="1076.8" cy="266.0" r="1.65"/><circle cx="1077.7" cy="266.5" r="1.65"/><circle cx="1078.7" cy="271.5" r="1.65"/><circle cx="1079.7" cy="263.7" r="1.65"/><circle cx="1080.6" cy="268.9" r="1.65"/><circle cx="1081.6" cy="259.9" r="1.65"/><circle cx="1082.6" cy="269.0" r="1.65"/><circle cx="1083.5" cy="258.6" r="1.65"/><circle cx="1084.5" cy="259.1" r="1.65"/><circle cx="1085.4" cy="254.7" r="1.65"/><circle cx="1086.4" cy="257.7" r="1.65"/><circle cx="1087.4" cy="256.9" r="1.65"/><circle cx="1088.3" cy="246.8" r="1.65"/><circle cx="1089.3" cy="247.8" r="1.65"/><circle cx="1090.3" cy="259.0" r="1.65"/><circle cx="1091.2" cy="257.6" r="1.65"/><circle cx="1092.2" cy="273.3" r="1.65"/><circle cx="1093.2" cy="271.2" r="1.65"/><circle cx="1094.1" cy="271.7" r="1.65"/><circle cx="1095.1" cy="284.0" r="1.65"/><circle cx="1096.1" cy="277.7" r="1.65"/><circle cx="1097.0" cy="295.2" r="1.65"/><circle cx="1098.0" cy="300.4" r="1.65"/><circle cx="1098.9" cy="316.8" r="1.65"/><circle cx="1099.9" cy="302.8" r="1.65"/><circle cx="1100.9" cy="298.8" r="1.65"/><circle cx="1101.8" cy="316.6" r="1.65"/><circle cx="1102.8" cy="298.6" r="1.65"/><circle cx="1103.8" cy="299.0" r="1.65"/><circle cx="1104.7" cy="298.7" r="1.65"/><circle cx="1105.7" cy="299.5" r="1.65"/><circle cx="1106.7" cy="279.0" r="1.65"/><circle cx="1107.6" cy="281.4" r="1.65"/><circle cx="1108.6" cy="287.9" r="1.65"/><circle cx="1109.6" cy="285.5" r="1.65"/><circle cx="1110.5" cy="285.5" r="1.65"/><circle cx="1111.5" cy="281.1" r="1.65"/><circle cx="1112.5" cy="293.1" r="1.65"/><circle cx="1113.4" cy="282.1" r="1.65"/><circle cx="1114.4" cy="277.5" r="1.65"/><circle cx="1115.3" cy="290.1" r="1.65"/><circle cx="1116.3" cy="282.8" r="1.65"/><circle cx="1117.3" cy="271.9" r="1.65"/><circle cx="1118.2" cy="280.2" r="1.65"/><circle cx="1119.2" cy="267.7" r="1.65"/><circle cx="1120.2" cy="281.1" r="1.65"/><circle cx="1121.1" cy="279.8" r="1.65"/><circle cx="1122.1" cy="278.7" r="1.65"/><circle cx="1123.1" cy="267.3" r="1.65"/><circle cx="1124.0" cy="262.5" r="1.65"/><circle cx="1125.0" cy="267.8" r="1.65"/><circle cx="1126.0" cy="257.8" r="1.65"/><circle cx="1126.9" cy="245.9" r="1.65"/><circle cx="1127.9" cy="248.4" r="1.65"/><circle cx="1128.8" cy="227.3" r="1.65"/><circle cx="1129.8" cy="231.0" r="1.65"/><circle cx="1130.8" cy="231.3" r="1.65"/><circle cx="1131.7" cy="236.2" r="1.65"/><circle cx="1132.7" cy="242.3" r="1.65"/><circle cx="1133.7" cy="214.5" r="1.65"/><circle cx="1134.6" cy="243.0" r="1.65"/><circle cx="1135.6" cy="240.1" r="1.65"/><circle cx="1136.6" cy="244.7" r="1.65"/><circle cx="1137.5" cy="236.4" r="1.65"/><circle cx="1138.5" cy="249.1" r="1.65"/><circle cx="1139.5" cy="256.6" r="1.65"/><circle cx="1140.4" cy="248.9" r="1.65"/><circle cx="1141.4" cy="246.6" r="1.65"/><circle cx="1142.4" cy="248.8" r="1.65"/><circle cx="1143.3" cy="251.0" r="1.65"/><circle cx="1144.3" cy="251.7" r="1.65"/><circle cx="1145.2" cy="238.8" r="1.65"/><circle cx="1146.2" cy="263.2" r="1.65"/><circle cx="1147.2" cy="228.0" r="1.65"/><circle cx="1148.1" cy="243.2" r="1.65"/><circle cx="1149.1" cy="243.2" r="1.65"/><circle cx="1150.1" cy="245.6" r="1.65"/><circle cx="1151.0" cy="250.7" r="1.65"/><circle cx="1152.0" cy="264.6" r="1.65"/><circle cx="1153.0" cy="249.9" r="1.65"/><circle cx="1153.9" cy="258.4" r="1.65"/><circle cx="1154.9" cy="260.8" r="1.65"/><circle cx="1155.9" cy="253.9" r="1.65"/><circle cx="1156.8" cy="262.3" r="1.65"/><circle cx="1157.8" cy="262.0" r="1.65"/><circle cx="1158.7" cy="257.4" r="1.65"/><circle cx="1159.7" cy="245.9" r="1.65"/><circle cx="1160.7" cy="235.4" r="1.65"/><circle cx="1161.6" cy="239.4" r="1.65"/><circle cx="1162.6" cy="228.6" r="1.65"/><circle cx="1163.6" cy="238.7" r="1.65"/><circle cx="1164.5" cy="233.4" r="1.65"/><circle cx="1165.5" cy="241.3" r="1.65"/><circle cx="1166.5" cy="233.9" r="1.65"/><circle cx="1167.4" cy="230.0" r="1.65"/><circle cx="1168.4" cy="222.1" r="1.65"/><circle cx="1169.4" cy="223.3" r="1.65"/><circle cx="1170.3" cy="235.9" r="1.65"/><circle cx="1171.3" cy="231.1" r="1.65"/><circle cx="1172.3" cy="238.8" r="1.65"/><circle cx="1173.2" cy="248.6" r="1.65"/><circle cx="1174.2" cy="254.6" r="1.65"/><circle cx="1175.1" cy="266.3" r="1.65"/><circle cx="1176.1" cy="270.3" r="1.65"/><circle cx="1177.1" cy="265.3" r="1.65"/><circle cx="1178.0" cy="258.5" r="1.65"/><circle cx="1179.0" cy="278.0" r="1.65"/><circle cx="1180.0" cy="298.7" r="1.65"/><circle cx="1180.9" cy="299.4" r="1.65"/><circle cx="1181.9" cy="302.9" r="1.65"/><circle cx="1182.9" cy="305.7" r="1.65"/><circle cx="1183.8" cy="298.3" r="1.65"/><circle cx="1184.8" cy="308.8" r="1.65"/><circle cx="1185.8" cy="320.8" r="1.65"/><circle cx="1186.7" cy="321.1" r="1.65"/><circle cx="1187.7" cy="322.4" r="1.65"/><circle cx="1188.6" cy="324.8" r="1.65"/><circle cx="1189.6" cy="310.3" r="1.65"/><circle cx="1190.6" cy="327.6" r="1.65"/><circle cx="1191.5" cy="324.2" r="1.65"/><circle cx="1192.5" cy="322.0" r="1.65"/><circle cx="1193.5" cy="317.2" r="1.65"/><circle cx="1194.4" cy="325.5" r="1.65"/><circle cx="1195.4" cy="323.7" r="1.65"/><circle cx="1196.4" cy="308.4" r="1.65"/><circle cx="1197.3" cy="320.3" r="1.65"/><circle cx="1198.3" cy="318.7" r="1.65"/><circle cx="1199.3" cy="323.6" r="1.65"/><circle cx="1200.2" cy="318.4" r="1.65"/><circle cx="1201.2" cy="330.5" r="1.65"/><circle cx="1202.2" cy="325.0" r="1.65"/><circle cx="1203.1" cy="323.4" r="1.65"/><circle cx="1204.1" cy="313.0" r="1.65"/><circle cx="1205.0" cy="308.0" r="1.65"/><circle cx="1206.0" cy="309.1" r="1.65"/><circle cx="1207.0" cy="305.8" r="1.65"/><circle cx="1207.9" cy="301.4" r="1.65"/><circle cx="1208.9" cy="300.1" r="1.65"/><circle cx="1209.9" cy="292.5" r="1.65"/><circle cx="1210.8" cy="287.9" r="1.65"/><circle cx="1211.8" cy="293.0" r="1.65"/><circle cx="1212.8" cy="289.7" r="1.65"/><circle cx="1213.7" cy="278.6" r="1.65"/><circle cx="1214.7" cy="283.1" r="1.65"/><circle cx="1215.7" cy="273.5" r="1.65"/><circle cx="1216.6" cy="274.1" r="1.65"/><circle cx="1217.6" cy="277.9" r="1.65"/><circle cx="1218.5" cy="275.5" r="1.65"/><circle cx="1219.5" cy="277.6" r="1.65"/><circle cx="1220.5" cy="272.0" r="1.65"/><circle cx="1221.4" cy="275.0" r="1.65"/><circle cx="1222.4" cy="277.7" r="1.65"/><circle cx="1223.4" cy="275.5" r="1.65"/><circle cx="1224.3" cy="265.0" r="1.65"/><circle cx="1225.3" cy="272.1" r="1.65"/><circle cx="1226.3" cy="264.0" r="1.65"/><circle cx="1227.2" cy="253.1" r="1.65"/><circle cx="1228.2" cy="257.3" r="1.65"/><circle cx="1229.2" cy="256.9" r="1.65"/><circle cx="1230.1" cy="258.9" r="1.65"/><circle cx="1231.1" cy="250.1" r="1.65"/><circle cx="1232.1" cy="239.6" r="1.65"/><circle cx="1233.0" cy="267.4" r="1.65"/><circle cx="1234.0" cy="255.1" r="1.65"/><circle cx="1234.9" cy="246.6" r="1.65"/><circle cx="1235.9" cy="259.5" r="1.65"/><circle cx="1236.9" cy="254.2" r="1.65"/><circle cx="1237.8" cy="259.8" r="1.65"/><circle cx="1238.8" cy="254.3" r="1.65"/><circle cx="1239.8" cy="281.8" r="1.65"/><circle cx="1240.7" cy="269.5" r="1.65"/><circle cx="1241.7" cy="269.7" r="1.65"/><circle cx="1242.7" cy="269.8" r="1.65"/><circle cx="1243.6" cy="279.3" r="1.65"/><circle cx="1244.6" cy="273.1" r="1.65"/><circle cx="1245.6" cy="272.6" r="1.65"/><circle cx="1246.5" cy="283.5" r="1.65"/><circle cx="1247.5" cy="284.9" r="1.65"/><circle cx="1248.4" cy="292.8" r="1.65"/><circle cx="1249.4" cy="289.4" r="1.65"/><circle cx="1250.4" cy="292.9" r="1.65"/><circle cx="1251.3" cy="289.7" r="1.65"/><circle cx="1252.3" cy="283.7" r="1.65"/><circle cx="1253.3" cy="282.5" r="1.65"/><circle cx="1254.2" cy="271.1" r="1.65"/><circle cx="1255.2" cy="260.7" r="1.65"/><circle cx="1256.2" cy="266.5" r="1.65"/><circle cx="1257.1" cy="247.3" r="1.65"/><circle cx="1258.1" cy="263.6" r="1.65"/><circle cx="1259.1" cy="250.7" r="1.65"/><circle cx="1260.0" cy="240.5" r="1.65"/><circle cx="1261.0" cy="257.6" r="1.65"/><circle cx="1262.0" cy="255.6" r="1.65"/><circle cx="1262.9" cy="252.6" r="1.65"/><circle cx="1263.9" cy="267.2" r="1.65"/><circle cx="1264.8" cy="257.5" r="1.65"/><circle cx="1265.8" cy="248.1" r="1.65"/><circle cx="1266.8" cy="262.0" r="1.65"/><circle cx="1267.7" cy="253.3" r="1.65"/><circle cx="1268.7" cy="255.1" r="1.65"/><circle cx="1269.7" cy="259.7" r="1.65"/><circle cx="1270.6" cy="258.9" r="1.65"/><circle cx="1271.6" cy="262.5" r="1.65"/><circle cx="1272.6" cy="263.4" r="1.65"/><circle cx="1273.5" cy="256.5" r="1.65"/><circle cx="1274.5" cy="266.6" r="1.65"/><circle cx="1275.5" cy="266.8" r="1.65"/><circle cx="1276.4" cy="268.2" r="1.65"/><circle cx="1277.4" cy="273.1" r="1.65"/><circle cx="1278.3" cy="269.3" r="1.65"/><circle cx="1279.3" cy="267.0" r="1.65"/><circle cx="1280.3" cy="267.5" r="1.65"/><circle cx="1281.2" cy="264.4" r="1.65"/><circle cx="1282.2" cy="260.2" r="1.65"/><circle cx="1283.2" cy="226.6" r="1.65"/><circle cx="1284.1" cy="234.9" r="1.65"/><circle cx="1285.1" cy="258.5" r="1.65"/><circle cx="1286.1" cy="246.2" r="1.65"/><circle cx="1287.0" cy="232.8" r="1.65"/><circle cx="1288.0" cy="243.5" r="1.65"/><circle cx="1289.0" cy="261.9" r="1.65"/><circle cx="1289.9" cy="236.1" r="1.65"/><circle cx="1290.9" cy="228.2" r="1.65"/><circle cx="1291.8" cy="230.8" r="1.65"/><circle cx="1292.8" cy="255.8" r="1.65"/><circle cx="1293.8" cy="259.9" r="1.65"/><circle cx="1294.7" cy="259.8" r="1.65"/><circle cx="1295.7" cy="260.2" r="1.65"/><circle cx="1296.7" cy="259.7" r="1.65"/><circle cx="1297.6" cy="267.5" r="1.65"/><circle cx="1298.6" cy="265.5" r="1.65"/><circle cx="1299.6" cy="277.3" r="1.65"/><circle cx="1300.5" cy="275.5" r="1.65"/><circle cx="1301.5" cy="284.8" r="1.65"/><circle cx="1302.5" cy="296.6" r="1.65"/><circle cx="1303.4" cy="286.4" r="1.65"/><circle cx="1304.4" cy="287.1" r="1.65"/><circle cx="1305.4" cy="285.3" r="1.65"/><circle cx="1306.3" cy="289.2" r="1.65"/><circle cx="1307.3" cy="282.6" r="1.65"/><circle cx="1308.2" cy="279.9" r="1.65"/><circle cx="1309.2" cy="268.8" r="1.65"/><circle cx="1310.2" cy="268.6" r="1.65"/><circle cx="1311.1" cy="275.7" r="1.65"/><circle cx="1312.1" cy="271.3" r="1.65"/><circle cx="1313.1" cy="277.9" r="1.65"/><circle cx="1314.0" cy="263.7" r="1.65"/><circle cx="1315.0" cy="254.1" r="1.65"/><circle cx="1316.0" cy="247.0" r="1.65"/><circle cx="1316.9" cy="272.9" r="1.65"/><circle cx="1317.9" cy="264.1" r="1.65"/><circle cx="1318.9" cy="278.7" r="1.65"/><circle cx="1319.8" cy="284.0" r="1.65"/><circle cx="1320.8" cy="299.5" r="1.65"/><circle cx="1321.7" cy="312.0" r="1.65"/><circle cx="1322.7" cy="309.3" r="1.65"/></g><g fill="#f1443b"><circle cx="972.6" cy="312.0" r="1.75"/><circle cx="973.6" cy="314.1" r="1.75"/><circle cx="974.5" cy="316.4" r="1.75"/><circle cx="975.5" cy="318.9" r="1.75"/><circle cx="976.5" cy="321.8" r="1.75"/><circle cx="977.4" cy="323.1" r="1.75"/><circle cx="978.4" cy="322.8" r="1.75"/><circle cx="979.4" cy="321.8" r="1.75"/><circle cx="980.3" cy="320.8" r="1.75"/><circle cx="981.3" cy="320.1" r="1.75"/><circle cx="982.2" cy="319.5" r="1.75"/><circle cx="983.2" cy="318.4" r="1.75"/><circle cx="984.2" cy="315.9" r="1.75"/><circle cx="985.1" cy="312.5" r="1.75"/><circle cx="986.1" cy="308.8" r="1.75"/><circle cx="987.1" cy="304.9" r="1.75"/><circle cx="988.0" cy="301.1" r="1.75"/><circle cx="989.0" cy="297.4" r="1.75"/><circle cx="990.0" cy="293.9" r="1.75"/><circle cx="990.9" cy="290.7" r="1.75"/><circle cx="991.9" cy="288.2" r="1.75"/><circle cx="992.9" cy="284.9" r="1.75"/><circle cx="993.8" cy="279.3" r="1.75"/><circle cx="994.8" cy="277.0" r="1.75"/><circle cx="995.7" cy="275.6" r="1.75"/><circle cx="996.7" cy="274.5" r="1.75"/><circle cx="997.7" cy="273.5" r="1.75"/><circle cx="998.6" cy="272.1" r="1.75"/><circle cx="999.6" cy="270.1" r="1.75"/><circle cx="1000.6" cy="267.7" r="1.75"/><circle cx="1001.5" cy="265.4" r="1.75"/><circle cx="1002.5" cy="263.4" r="1.75"/><circle cx="1003.5" cy="261.7" r="1.75"/><circle cx="1004.4" cy="260.0" r="1.75"/><circle cx="1005.4" cy="258.8" r="1.75"/><circle cx="1006.4" cy="258.3" r="1.75"/><circle cx="1007.3" cy="259.1" r="1.75"/><circle cx="1008.3" cy="261.4" r="1.75"/><circle cx="1009.3" cy="263.9" r="1.75"/><circle cx="1010.2" cy="266.0" r="1.75"/><circle cx="1011.2" cy="268.1" r="1.75"/><circle cx="1012.1" cy="270.1" r="1.75"/><circle cx="1013.1" cy="271.7" r="1.75"/><circle cx="1014.1" cy="273.0" r="1.75"/><circle cx="1015.0" cy="274.1" r="1.75"/><circle cx="1016.0" cy="274.7" r="1.75"/><circle cx="1017.0" cy="274.7" r="1.75"/><circle cx="1017.9" cy="273.2" r="1.75"/><circle cx="1018.9" cy="270.6" r="1.75"/><circle cx="1019.9" cy="267.8" r="1.75"/><circle cx="1020.8" cy="264.7" r="1.75"/><circle cx="1021.8" cy="262.1" r="1.75"/><circle cx="1022.8" cy="259.8" r="1.75"/><circle cx="1023.7" cy="257.8" r="1.75"/><circle cx="1024.7" cy="256.1" r="1.75"/><circle cx="1025.6" cy="255.1" r="1.75"/><circle cx="1026.6" cy="254.6" r="1.75"/><circle cx="1027.6" cy="254.4" r="1.75"/><circle cx="1028.5" cy="254.3" r="1.75"/><circle cx="1029.5" cy="254.3" r="1.75"/><circle cx="1030.5" cy="254.3" r="1.75"/><circle cx="1031.4" cy="254.4" r="1.75"/><circle cx="1032.4" cy="254.5" r="1.75"/><circle cx="1033.4" cy="254.6" r="1.75"/><circle cx="1034.3" cy="254.6" r="1.75"/><circle cx="1035.3" cy="254.2" r="1.75"/><circle cx="1036.3" cy="253.6" r="1.75"/><circle cx="1037.2" cy="253.4" r="1.75"/><circle cx="1038.2" cy="254.0" r="1.75"/><circle cx="1039.2" cy="256.1" r="1.75"/><circle cx="1040.1" cy="258.8" r="1.75"/><circle cx="1041.1" cy="261.3" r="1.75"/><circle cx="1042.0" cy="263.8" r="1.75"/><circle cx="1043.0" cy="266.5" r="1.75"/><circle cx="1044.0" cy="269.6" r="1.75"/><circle cx="1044.9" cy="272.9" r="1.75"/><circle cx="1045.9" cy="276.2" r="1.75"/><circle cx="1046.9" cy="279.5" r="1.75"/><circle cx="1047.8" cy="282.5" r="1.75"/><circle cx="1048.8" cy="284.4" r="1.75"/><circle cx="1049.8" cy="285.3" r="1.75"/><circle cx="1050.7" cy="285.7" r="1.75"/><circle cx="1051.7" cy="286.1" r="1.75"/><circle cx="1052.7" cy="286.5" r="1.75"/><circle cx="1053.6" cy="286.9" r="1.75"/><circle cx="1054.6" cy="287.3" r="1.75"/><circle cx="1055.5" cy="287.4" r="1.75"/><circle cx="1056.5" cy="287.2" r="1.75"/><circle cx="1057.5" cy="286.3" r="1.75"/><circle cx="1058.4" cy="285.6" r="1.75"/><circle cx="1059.4" cy="285.9" r="1.75"/><circle cx="1060.4" cy="287.3" r="1.75"/><circle cx="1061.3" cy="289.2" r="1.75"/><circle cx="1062.3" cy="291.0" r="1.75"/><circle cx="1063.3" cy="293.4" r="1.75"/><circle cx="1064.2" cy="294.4" r="1.75"/><circle cx="1065.2" cy="293.3" r="1.75"/><circle cx="1066.2" cy="291.4" r="1.75"/><circle cx="1067.1" cy="290.3" r="1.75"/><circle cx="1068.1" cy="290.1" r="1.75"/><circle cx="1069.0" cy="289.9" r="1.75"/><circle cx="1070.0" cy="289.1" r="1.75"/><circle cx="1071.0" cy="287.0" r="1.75"/><circle cx="1071.9" cy="283.6" r="1.75"/><circle cx="1072.9" cy="277.6" r="1.75"/><circle cx="1073.9" cy="275.3" r="1.75"/><circle cx="1074.8" cy="274.2" r="1.75"/><circle cx="1075.8" cy="273.6" r="1.75"/><circle cx="1076.8" cy="273.0" r="1.75"/><circle cx="1077.7" cy="272.3" r="1.75"/><circle cx="1078.7" cy="271.7" r="1.75"/><circle cx="1079.7" cy="271.2" r="1.75"/><circle cx="1080.6" cy="270.6" r="1.75"/><circle cx="1081.6" cy="269.9" r="1.75"/><circle cx="1082.6" cy="268.9" r="1.75"/><circle cx="1083.5" cy="267.8" r="1.75"/><circle cx="1084.5" cy="266.4" r="1.75"/><circle cx="1085.4" cy="265.0" r="1.75"/><circle cx="1086.4" cy="263.6" r="1.75"/><circle cx="1087.4" cy="262.4" r="1.75"/><circle cx="1088.3" cy="261.3" r="1.75"/><circle cx="1089.3" cy="260.1" r="1.75"/><circle cx="1090.3" cy="259.0" r="1.75"/><circle cx="1091.2" cy="258.1" r="1.75"/><circle cx="1092.2" cy="257.5" r="1.75"/><circle cx="1093.2" cy="257.4" r="1.75"/><circle cx="1094.1" cy="259.0" r="1.75"/><circle cx="1095.1" cy="262.6" r="1.75"/><circle cx="1096.1" cy="266.2" r="1.75"/><circle cx="1097.0" cy="269.9" r="1.75"/><circle cx="1098.0" cy="273.7" r="1.75"/><circle cx="1098.9" cy="277.5" r="1.75"/><circle cx="1099.9" cy="281.6" r="1.75"/><circle cx="1100.9" cy="285.5" r="1.75"/><circle cx="1101.8" cy="288.9" r="1.75"/><circle cx="1102.8" cy="291.9" r="1.75"/><circle cx="1103.8" cy="294.2" r="1.75"/><circle cx="1104.7" cy="295.0" r="1.75"/><circle cx="1105.7" cy="294.8" r="1.75"/><circle cx="1106.7" cy="294.0" r="1.75"/><circle cx="1107.6" cy="293.1" r="1.75"/><circle cx="1108.6" cy="292.1" r="1.75"/><circle cx="1109.6" cy="290.9" r="1.75"/><circle cx="1110.5" cy="289.7" r="1.75"/><circle cx="1111.5" cy="288.3" r="1.75"/><circle cx="1112.5" cy="286.9" r="1.75"/><circle cx="1113.4" cy="285.4" r="1.75"/><circle cx="1114.4" cy="283.9" r="1.75"/><circle cx="1115.3" cy="282.6" r="1.75"/><circle cx="1116.3" cy="281.4" r="1.75"/><circle cx="1117.3" cy="280.4" r="1.75"/><circle cx="1118.2" cy="279.6" r="1.75"/><circle cx="1119.2" cy="279.0" r="1.75"/><circle cx="1120.2" cy="278.8" r="1.75"/><circle cx="1121.1" cy="278.8" r="1.75"/><circle cx="1122.1" cy="278.7" r="1.75"/><circle cx="1123.1" cy="278.2" r="1.75"/><circle cx="1124.0" cy="276.9" r="1.75"/><circle cx="1125.0" cy="274.7" r="1.75"/><circle cx="1126.0" cy="272.0" r="1.75"/><circle cx="1126.9" cy="269.2" r="1.75"/><circle cx="1127.9" cy="266.0" r="1.75"/><circle cx="1128.8" cy="262.6" r="1.75"/><circle cx="1129.8" cy="258.9" r="1.75"/><circle cx="1130.8" cy="254.9" r="1.75"/><circle cx="1131.7" cy="250.8" r="1.75"/><circle cx="1132.7" cy="246.1" r="1.75"/><circle cx="1133.7" cy="242.8" r="1.75"/><circle cx="1134.6" cy="242.1" r="1.75"/><circle cx="1135.6" cy="242.5" r="1.75"/><circle cx="1136.6" cy="243.2" r="1.75"/><circle cx="1137.5" cy="243.5" r="1.75"/><circle cx="1138.5" cy="243.6" r="1.75"/><circle cx="1139.5" cy="243.9" r="1.75"/><circle cx="1140.4" cy="244.4" r="1.75"/><circle cx="1141.4" cy="245.7" r="1.75"/><circle cx="1142.4" cy="247.5" r="1.75"/><circle cx="1143.3" cy="249.2" r="1.75"/><circle cx="1144.3" cy="250.1" r="1.75"/><circle cx="1145.2" cy="249.7" r="1.75"/><circle cx="1146.2" cy="248.6" r="1.75"/><circle cx="1147.2" cy="247.2" r="1.75"/><circle cx="1148.1" cy="246.2" r="1.75"/><circle cx="1149.1" cy="245.5" r="1.75"/><circle cx="1150.1" cy="245.2" r="1.75"/><circle cx="1151.0" cy="245.4" r="1.75"/><circle cx="1152.0" cy="246.1" r="1.75"/><circle cx="1153.0" cy="246.9" r="1.75"/><circle cx="1153.9" cy="247.8" r="1.75"/><circle cx="1154.9" cy="248.8" r="1.75"/><circle cx="1155.9" cy="249.9" r="1.75"/><circle cx="1156.8" cy="251.1" r="1.75"/><circle cx="1157.8" cy="252.1" r="1.75"/><circle cx="1158.7" cy="252.8" r="1.75"/><circle cx="1159.7" cy="253.3" r="1.75"/><circle cx="1160.7" cy="253.5" r="1.75"/><circle cx="1161.6" cy="253.1" r="1.75"/><circle cx="1162.6" cy="252.0" r="1.75"/><circle cx="1163.6" cy="250.0" r="1.75"/><circle cx="1164.5" cy="247.3" r="1.75"/><circle cx="1165.5" cy="244.6" r="1.75"/><circle cx="1166.5" cy="242.4" r="1.75"/><circle cx="1167.4" cy="240.3" r="1.75"/><circle cx="1168.4" cy="238.4" r="1.75"/><circle cx="1169.4" cy="236.8" r="1.75"/><circle cx="1170.3" cy="235.4" r="1.75"/><circle cx="1171.3" cy="234.5" r="1.75"/><circle cx="1172.3" cy="234.1" r="1.75"/><circle cx="1173.2" cy="234.7" r="1.75"/><circle cx="1174.2" cy="236.8" r="1.75"/><circle cx="1175.1" cy="239.3" r="1.75"/><circle cx="1176.1" cy="241.9" r="1.75"/><circle cx="1177.1" cy="244.8" r="1.75"/><circle cx="1178.0" cy="248.3" r="1.75"/><circle cx="1179.0" cy="252.6" r="1.75"/><circle cx="1180.0" cy="257.3" r="1.75"/><circle cx="1180.9" cy="262.5" r="1.75"/><circle cx="1181.9" cy="268.2" r="1.75"/><circle cx="1182.9" cy="274.0" r="1.75"/><circle cx="1183.8" cy="279.4" r="1.75"/><circle cx="1184.8" cy="284.6" r="1.75"/><circle cx="1185.8" cy="289.8" r="1.75"/><circle cx="1186.7" cy="295.1" r="1.75"/><circle cx="1187.7" cy="300.5" r="1.75"/><circle cx="1188.6" cy="305.4" r="1.75"/><circle cx="1189.6" cy="309.3" r="1.75"/><circle cx="1190.6" cy="312.6" r="1.75"/><circle cx="1191.5" cy="315.1" r="1.75"/><circle cx="1192.5" cy="317.2" r="1.75"/><circle cx="1193.5" cy="319.0" r="1.75"/><circle cx="1194.4" cy="320.2" r="1.75"/><circle cx="1195.4" cy="320.7" r="1.75"/><circle cx="1196.4" cy="320.4" r="1.75"/><circle cx="1197.3" cy="319.6" r="1.75"/><circle cx="1198.3" cy="318.7" r="1.75"/><circle cx="1199.3" cy="318.1" r="1.75"/><circle cx="1200.2" cy="318.1" r="1.75"/><circle cx="1201.2" cy="318.7" r="1.75"/><circle cx="1202.2" cy="319.4" r="1.75"/><circle cx="1203.1" cy="320.1" r="1.75"/><circle cx="1204.1" cy="320.2" r="1.75"/><circle cx="1205.0" cy="319.7" r="1.75"/><circle cx="1206.0" cy="318.6" r="1.75"/><circle cx="1207.0" cy="317.1" r="1.75"/><circle cx="1207.9" cy="315.5" r="1.75"/><circle cx="1208.9" cy="313.7" r="1.75"/><circle cx="1209.9" cy="311.7" r="1.75"/><circle cx="1210.8" cy="309.4" r="1.75"/><circle cx="1211.8" cy="306.5" r="1.75"/><circle cx="1212.8" cy="302.6" r="1.75"/><circle cx="1213.7" cy="298.3" r="1.75"/><circle cx="1214.7" cy="294.8" r="1.75"/><circle cx="1215.7" cy="291.7" r="1.75"/><circle cx="1216.6" cy="289.0" r="1.75"/><circle cx="1217.6" cy="286.7" r="1.75"/><circle cx="1218.5" cy="284.7" r="1.75"/><circle cx="1219.5" cy="282.9" r="1.75"/><circle cx="1220.5" cy="281.3" r="1.75"/><circle cx="1221.4" cy="279.8" r="1.75"/><circle cx="1222.4" cy="278.5" r="1.75"/><circle cx="1223.4" cy="277.4" r="1.75"/><circle cx="1224.3" cy="276.4" r="1.75"/><circle cx="1225.3" cy="275.7" r="1.75"/><circle cx="1226.3" cy="275.3" r="1.75"/><circle cx="1227.2" cy="274.6" r="1.75"/><circle cx="1228.2" cy="273.3" r="1.75"/><circle cx="1229.2" cy="271.3" r="1.75"/><circle cx="1230.1" cy="269.0" r="1.75"/><circle cx="1231.1" cy="266.6" r="1.75"/><circle cx="1232.1" cy="264.3" r="1.75"/><circle cx="1233.0" cy="262.0" r="1.75"/><circle cx="1234.0" cy="259.8" r="1.75"/><circle cx="1234.9" cy="257.9" r="1.75"/><circle cx="1235.9" cy="256.2" r="1.75"/><circle cx="1236.9" cy="254.8" r="1.75"/><circle cx="1237.8" cy="253.9" r="1.75"/><circle cx="1238.8" cy="253.7" r="1.75"/><circle cx="1239.8" cy="254.1" r="1.75"/><circle cx="1240.7" cy="255.1" r="1.75"/><circle cx="1241.7" cy="256.6" r="1.75"/><circle cx="1242.7" cy="259.0" r="1.75"/><circle cx="1243.6" cy="262.3" r="1.75"/><circle cx="1244.6" cy="265.5" r="1.75"/><circle cx="1245.6" cy="268.2" r="1.75"/><circle cx="1246.5" cy="270.8" r="1.75"/><circle cx="1247.5" cy="273.4" r="1.75"/><circle cx="1248.4" cy="275.9" r="1.75"/><circle cx="1249.4" cy="278.4" r="1.75"/><circle cx="1250.4" cy="281.2" r="1.75"/><circle cx="1251.3" cy="283.7" r="1.75"/><circle cx="1252.3" cy="285.2" r="1.75"/><circle cx="1253.3" cy="285.6" r="1.75"/><circle cx="1254.2" cy="285.3" r="1.75"/><circle cx="1255.2" cy="284.3" r="1.75"/><circle cx="1256.2" cy="283.0" r="1.75"/><circle cx="1257.1" cy="281.0" r="1.75"/><circle cx="1258.1" cy="278.4" r="1.75"/><circle cx="1259.1" cy="275.2" r="1.75"/><circle cx="1260.0" cy="271.0" r="1.75"/><circle cx="1261.0" cy="267.1" r="1.75"/><circle cx="1262.0" cy="264.0" r="1.75"/><circle cx="1262.9" cy="261.1" r="1.75"/><circle cx="1263.9" cy="258.8" r="1.75"/><circle cx="1264.8" cy="256.9" r="1.75"/><circle cx="1265.8" cy="255.5" r="1.75"/><circle cx="1266.8" cy="254.4" r="1.75"/><circle cx="1267.7" cy="253.7" r="1.75"/><circle cx="1268.7" cy="253.5" r="1.75"/><circle cx="1269.7" cy="253.7" r="1.75"/><circle cx="1270.6" cy="254.2" r="1.75"/><circle cx="1271.6" cy="254.7" r="1.75"/><circle cx="1272.6" cy="255.2" r="1.75"/><circle cx="1273.5" cy="255.8" r="1.75"/><circle cx="1274.5" cy="256.7" r="1.75"/><circle cx="1275.5" cy="257.9" r="1.75"/><circle cx="1276.4" cy="259.7" r="1.75"/><circle cx="1277.4" cy="261.7" r="1.75"/><circle cx="1278.3" cy="263.4" r="1.75"/><circle cx="1279.3" cy="264.3" r="1.75"/><circle cx="1280.3" cy="264.9" r="1.75"/><circle cx="1281.2" cy="265.2" r="1.75"/><circle cx="1282.2" cy="265.0" r="1.75"/><circle cx="1283.2" cy="264.2" r="1.75"/><circle cx="1284.1" cy="262.5" r="1.75"/><circle cx="1285.1" cy="260.3" r="1.75"/><circle cx="1286.1" cy="258.2" r="1.75"/><circle cx="1287.0" cy="256.0" r="1.75"/><circle cx="1288.0" cy="253.6" r="1.75"/><circle cx="1289.0" cy="251.4" r="1.75"/><circle cx="1289.9" cy="249.5" r="1.75"/><circle cx="1290.9" cy="247.5" r="1.75"/><circle cx="1291.8" cy="245.7" r="1.75"/><circle cx="1292.8" cy="244.1" r="1.75"/><circle cx="1293.8" cy="243.0" r="1.75"/><circle cx="1294.7" cy="242.9" r="1.75"/><circle cx="1295.7" cy="244.5" r="1.75"/><circle cx="1296.7" cy="246.8" r="1.75"/><circle cx="1297.6" cy="249.5" r="1.75"/><circle cx="1298.6" cy="252.7" r="1.75"/><circle cx="1299.6" cy="256.1" r="1.75"/><circle cx="1300.5" cy="259.3" r="1.75"/><circle cx="1301.5" cy="262.5" r="1.75"/><circle cx="1302.5" cy="265.8" r="1.75"/><circle cx="1303.4" cy="269.2" r="1.75"/><circle cx="1304.4" cy="272.6" r="1.75"/><circle cx="1305.4" cy="275.4" r="1.75"/><circle cx="1306.3" cy="277.6" r="1.75"/><circle cx="1307.3" cy="279.3" r="1.75"/><circle cx="1308.2" cy="280.5" r="1.75"/><circle cx="1309.2" cy="281.5" r="1.75"/><circle cx="1310.2" cy="282.1" r="1.75"/><circle cx="1311.1" cy="282.2" r="1.75"/><circle cx="1312.1" cy="281.4" r="1.75"/><circle cx="1313.1" cy="280.0" r="1.75"/><circle cx="1314.0" cy="278.0" r="1.75"/><circle cx="1315.0" cy="275.8" r="1.75"/><circle cx="1316.0" cy="273.3" r="1.75"/><circle cx="1316.9" cy="270.3" r="1.75"/><circle cx="1317.9" cy="267.6" r="1.75"/><circle cx="1318.9" cy="265.8" r="1.75"/><circle cx="1319.8" cy="266.5" r="1.75"/><circle cx="1320.8" cy="268.7" r="1.75"/><circle cx="1321.7" cy="270.9" r="1.75"/><circle cx="1322.7" cy="273.6" r="1.75"/></g></svg>
<span class="t" style="left:934.37px;top:200.00px;height:11px;line-height:11px;font-size:7px;color:#555;transform:scaleX(1.0600);">246,000</span>
<span class="t" style="left:934.37px;top:220.00px;height:11px;line-height:11px;font-size:7px;color:#555;transform:scaleX(1.0600);">225,500</span>
<span class="t" style="left:934.37px;top:240.00px;height:11px;line-height:11px;font-size:7px;color:#555;transform:scaleX(1.0600);">205,000</span>
<span class="t" style="left:934.37px;top:259.00px;height:11px;line-height:11px;font-size:7px;color:#555;transform:scaleX(1.0600);">184,500</span>
<span class="t" style="left:934.37px;top:279.00px;height:11px;line-height:11px;font-size:7px;color:#555;transform:scaleX(1.0600);">164,000</span>
<span class="t" style="left:934.37px;top:299.00px;height:11px;line-height:11px;font-size:7px;color:#555;transform:scaleX(1.0600);">143,500</span>
<span class="t" style="left:934.37px;top:319.00px;height:11px;line-height:11px;font-size:7px;color:#555;transform:scaleX(1.0600);">123,000</span>
<span class="t" style="left:934.37px;top:338.00px;height:11px;line-height:11px;font-size:7px;color:#555;transform:scaleX(1.0600);">102,500</span>
<span class="t" style="left:938.49px;top:358.00px;height:11px;line-height:11px;font-size:7px;color:#555;transform:scaleX(1.0600);">82,000</span>
<span class="t" style="left:972.69px;top:369.00px;height:11px;line-height:11px;font-size:7px;color:#555;transform:scaleX(1.0600);">Gen</span>
<span class="t" style="left:971.52px;top:377.00px;height:11px;line-height:11px;font-size:7px;color:#555;transform:scaleX(1.0500);">2020</span>
<span class="t" style="left:1003.21px;top:369.00px;height:11px;line-height:11px;font-size:7px;color:#555;transform:scaleX(1.0600);">Feb</span>
<span class="t" style="left:1001.42px;top:377.00px;height:11px;line-height:11px;font-size:7px;color:#555;transform:scaleX(1.0500);">2020</span>
<span class="t" style="left:1031.18px;top:369.00px;height:11px;line-height:11px;font-size:7px;color:#555;transform:scaleX(1.0600);">Mar</span>
<span class="t" style="left:1029.39px;top:377.00px;height:11px;line-height:11px;font-size:7px;color:#555;transform:scaleX(1.0500);">2020</span>
<span class="t" style="left:1061.69px;top:369.00px;height:11px;line-height:11px;font-size:7px;color:#555;transform:scaleX(1.0600);">Apr</span>
<span class="t" style="left:1059.29px;top:377.00px;height:11px;line-height:11px;font-size:7px;color:#555;transform:scaleX(1.0500);">2020</span>
<span class="t" style="left:1089.18px;top:369.00px;height:11px;line-height:11px;font-size:7px;color:#555;transform:scaleX(1.0600);">Mag</span>
<span class="t" style="left:1088.23px;top:377.00px;height:11px;line-height:11px;font-size:7px;color:#555;transform:scaleX(1.0500);">2020</span>
<span class="t" style="left:1120.52px;top:369.00px;height:11px;line-height:11px;font-size:7px;color:#555;transform:scaleX(1.0600);">Giu</span>
<span class="t" style="left:1118.13px;top:377.00px;height:11px;line-height:11px;font-size:7px;color:#555;transform:scaleX(1.0500);">2020</span>
<span class="t" style="left:1149.04px;top:369.00px;height:11px;line-height:11px;font-size:7px;color:#555;transform:scaleX(1.0600);">Lug</span>
<span class="t" style="left:1147.06px;top:377.00px;height:11px;line-height:11px;font-size:7px;color:#555;transform:scaleX(1.0500);">2020</span>
<span class="t" style="left:1178.53px;top:369.00px;height:11px;line-height:11px;font-size:7px;color:#555;transform:scaleX(1.0600);">Ago</span>
<span class="t" style="left:1176.96px;top:377.00px;height:11px;line-height:11px;font-size:7px;color:#555;transform:scaleX(1.0500);">2020</span>
<span class="t" style="left:1209.46px;top:369.00px;height:11px;line-height:11px;font-size:7px;color:#555;transform:scaleX(1.0600);">Set</span>
<span class="t" style="left:1206.86px;top:377.00px;height:11px;line-height:11px;font-size:7px;color:#555;transform:scaleX(1.0500);">2020</span>
<span class="t" style="left:1239.02px;top:369.00px;height:11px;line-height:11px;font-size:7px;color:#555;transform:scaleX(1.0600);">Ott</span>
<span class="t" style="left:1235.79px;top:377.00px;height:11px;line-height:11px;font-size:7px;color:#555;transform:scaleX(1.0500);">2020</span>
<span class="t" style="left:1267.27px;top:369.00px;height:11px;line-height:11px;font-size:7px;color:#555;transform:scaleX(1.0600);">Nov</span>
<span class="t" style="left:1265.69px;top:377.00px;height:11px;line-height:11px;font-size:7px;color:#555;transform:scaleX(1.0500);">2020</span>
<span class="t" style="left:1297.44px;top:369.00px;height:11px;line-height:11px;font-size:7px;color:#555;transform:scaleX(1.0600);">Dic</span>
<span class="t" style="left:1294.63px;top:377.00px;height:11px;line-height:11px;font-size:7px;color:#555;transform:scaleX(1.0500);">2020</span>
<span class="t" style="left:1217.70px;top:181.00px;height:14px;line-height:14px;font-size:9.5px;color:#222;transform:scaleX(0.9356);">Backlog medio</span>
<span class="t" style="left:1292.30px;top:181.00px;height:14px;line-height:14px;font-size:9.5px;color:#222;transform:scaleX(0.9168);">Backlog</span>
<div class="b" style="left:928.00px;top:398.00px;width:402.00px;height:26.70px;background:#f4f4f4;border-top:1px solid #dcdcdc;box-sizing:border-box"></div>
<span class="t" style="left:935.00px;top:404.00px;height:14px;line-height:14px;font-size:9.5px;color:#8f8f8f;transform:scaleX(0.8653);">INFINITY ZUCCHETTI - Tickets: non risolti</span>
<span class="t" style="left:1302.90px;top:404.00px;height:13px;line-height:13px;font-size:8.5px;color:#5a5a5a;transform:scaleX(0.9492);">22:35</span>
<div class="b" style="left:467.00px;top:459.00px;width:428.00px;height:305.00px;background:#fff;border:1px solid #e9e9e9;box-shadow:0 2px 9px rgba(0,0,0,.065);box-sizing:border-box"></div>
<span class="t" style="left:484.00px;top:479.00px;height:14px;line-height:14px;font-size:9.3px;color:#666;-webkit-text-stroke:0.32px currentColor;transform:scaleX(1.0668);">Tickets per operatore (con SLA)</span>
<svg class="b" style="left:630px;top:481px" width="12" height="9" viewBox="0 0 12 9"><path d="M1.5 2.2 L5.6 6.5 L9.7 2.2" fill="none" stroke="#666" stroke-width="1.05"/></svg>
<div class="b" style="left:862.70px;top:480.80px;width:1.60px;height:1.60px;background:#4a4a4a;border-radius:1px"></div>
<div class="b" style="left:862.70px;top:484.55px;width:1.60px;height:1.60px;background:#4a4a4a;border-radius:1px"></div>
<div class="b" style="left:862.70px;top:488.30px;width:1.60px;height:1.60px;background:#4a4a4a;border-radius:1px"></div>
<svg class="b" style="left:467px;top:459px" width="428" height="305" viewBox="467 459 428 305"><path d="M565.5 628 V525.2 M567 523.6 H866.8" stroke="#cfcfcf" stroke-width="1.1" fill="none"/><path d="M567.30 518.5 V523.6" stroke="#cfcfcf" stroke-width="1"/><path d="M667.05 518.5 V523.6" stroke="#cfcfcf" stroke-width="1"/><path d="M766.80 518.5 V523.6" stroke="#cfcfcf" stroke-width="1"/><path d="M866.55 518.5 V523.6" stroke="#cfcfcf" stroke-width="1"/><rect x="567" y="526.1" width="298.95" height="10.80" fill="#f4685d"/><path d="M561.2 531.50 H565" stroke="#cfcfcf" stroke-width="1"/><rect x="567" y="539.1" width="199.20" height="10.70" fill="#f4685d"/><path d="M561.2 544.45 H565" stroke="#cfcfcf" stroke-width="1"/><rect x="567" y="551.1" width="199.20" height="11.70" fill="#a23e37"/><path d="M561.2 556.95 H565" stroke="#cfcfcf" stroke-width="1"/><rect x="567" y="564.5" width="99.45" height="10.30" fill="#f4685d"/><path d="M561.2 569.65 H565" stroke="#cfcfcf" stroke-width="1"/><rect x="567" y="576.6" width="99.45" height="10.90" fill="#f4685d"/><path d="M561.2 582.05 H565" stroke="#cfcfcf" stroke-width="1"/><rect x="567" y="589.3" width="99.45" height="10.30" fill="#f4685d"/><path d="M561.2 594.45 H565" stroke="#cfcfcf" stroke-width="1"/><rect x="567" y="602.0" width="99.45" height="10.70" fill="#f4685d"/><path d="M561.2 607.35 H565" stroke="#cfcfcf" stroke-width="1"/><rect x="567" y="614.3" width="99.45" height="11.70" fill="#f4685d"/><path d="M561.2 620.15 H565" stroke="#cfcfcf" stroke-width="1"/><circle cx="603.0" cy="639.4" r="3.9" fill="#f1433a"/><circle cx="655.3" cy="639.4" r="3.9" fill="#fdd017"/><circle cx="717.7" cy="639.0" r="3.9" fill="#4cae52"/></svg>
<span class="t" style="left:498.50px;top:527.00px;height:11px;line-height:11px;font-size:7px;color:#444;transform:scaleX(1.1375);">Vatteroni Moreno</span>
<span class="t" style="left:489.00px;top:540.00px;height:11px;line-height:11px;font-size:7px;color:#444;transform:scaleX(1.0967);clip-path:inset(0 0 0 1.2px);">Tornabuoni Federica</span>
<span class="t" style="left:513.00px;top:552.00px;height:11px;line-height:11px;font-size:7px;color:#444;transform:scaleX(1.0552);">Basso Alessio</span>
<span class="t" style="left:499.00px;top:565.00px;height:11px;line-height:11px;font-size:7px;color:#444;transform:scaleX(1.0931);">Folegnani Andrea</span>
<span class="t" style="left:501.00px;top:577.00px;height:11px;line-height:11px;font-size:7px;color:#444;transform:scaleX(1.0879);">Olivelli Elisabetta</span>
<span class="t" style="left:492.50px;top:590.00px;height:11px;line-height:11px;font-size:7px;color:#444;transform:scaleX(1.1026);">Tonlorenzi Gabriele</span>
<span class="t" style="left:502.00px;top:603.00px;height:11px;line-height:11px;font-size:7px;color:#444;transform:scaleX(1.0387);">Bacchiani Jacopo</span>
<span class="t" style="left:514.50px;top:615.00px;height:11px;line-height:11px;font-size:7px;color:#444;transform:scaleX(1.0788);">Baldi Daniele</span>
<span class="t" style="left:565.45px;top:510.00px;height:11px;line-height:11px;font-size:7px;color:#555;transform:scaleX(1.0500);">0</span>
<span class="t" style="left:665.20px;top:510.00px;height:11px;line-height:11px;font-size:7px;color:#555;transform:scaleX(1.0500);">1</span>
<span class="t" style="left:764.95px;top:510.00px;height:11px;line-height:11px;font-size:7px;color:#555;transform:scaleX(1.0500);">2</span>
<span class="t" style="left:864.70px;top:510.00px;height:11px;line-height:11px;font-size:7px;color:#555;transform:scaleX(1.0500);">3</span>
<span class="t" style="left:611.10px;top:634.00px;height:14px;line-height:14px;font-size:9.5px;color:#222;transform:scaleX(0.9840);">In ritardo</span>
<span class="t" style="left:663.40px;top:634.00px;height:14px;line-height:14px;font-size:9.5px;color:#222;transform:scaleX(0.9095);">In scadenza</span>
<span class="t" style="left:725.70px;top:634.00px;height:14px;line-height:14px;font-size:9.5px;color:#222;transform:scaleX(0.9819);">In tempo</span>
<div class="b" style="left:710.00px;top:553.00px;width:83.00px;height:30.00px;background:#f9c4bf;border:1px solid #ef5145;border-radius:3.5px;box-sizing:border-box"></div>
<span class="t" style="left:714.60px;top:558.00px;height:11px;line-height:11px;font-size:7px;color:#555;transform:scaleX(1.0414);">Basso Alessio</span>
<span class="t" style="left:714.60px;top:568.00px;height:11px;line-height:11px;font-size:7px;color:#555;transform:scaleX(1.1367);">In ritardo</span>
<span class="t" style="left:753.00px;top:568.00px;height:11px;line-height:11px;font-size:7px;color:#555;transform:scaleX(1.0463);">2 (stack 2)</span>
<div class="b" style="left:485.00px;top:649.00px;width:101.00px;height:63.00px;background:#f3f3f3;"></div>
<span class="t" style="left:520.70px;top:653.00px;height:14px;line-height:14px;font-size:9px;color:#333;transform:scaleX(0.9703);">Pagina</span>
<div class="b" style="left:520.00px;top:666.00px;width:30.00px;height:15.00px;background:#ebebeb;border-bottom:1.5px solid #3d80c4;box-sizing:border-box"></div>
<span class="t" style="left:533.05px;top:669.00px;height:11px;line-height:11px;font-size:7px;color:#555;">1</span>
<span class="t" style="left:531.89px;top:680.00px;height:14px;line-height:14px;font-size:9px;color:#333;">di</span>
<span class="t" style="left:531.41px;top:696.00px;height:11px;line-height:11px;font-size:7px;color:#333;">1+</span>
<svg class="b" style="left:485px;top:668px" width="101" height="24" viewBox="485 668 101 24" fill="none" stroke-width="1.1"><path d="M496.4 674 L492 679.4 L496.4 684.8 M501 674 L496.6 679.4 L501 684.8" stroke="#bfc4d2"/><path d="M513.8 674 L508.4 679.4 L513.8 684.8" stroke="#adb4c6"/><path d="M556.8 674 L562.6 679.4 L556.8 684.8" stroke="#2f3c63" stroke-width="1.3"/><path d="M570 674 L574.4 679.4 L570 684.8 M574.6 674 L579 679.4 L574.6 684.8" stroke="#bfc4d2"/></svg>
<div class="b" style="left:484.00px;top:721.00px;width:394.00px;height:26.70px;background:#f4f4f4;border-top:1px solid #dcdcdc;box-sizing:border-box"></div>
<span class="t" style="left:491.00px;top:727.00px;height:14px;line-height:14px;font-size:9.5px;color:#8f8f8f;transform:scaleX(0.8612);">INFINITY ZUCCHETTI - Tickets: non assegnati</span>
<span class="t" style="left:850.90px;top:728.00px;height:13px;line-height:13px;font-size:8.5px;color:#5a5a5a;transform:scaleX(0.9492);">22:37</span>
<div class="b" style="left:911.00px;top:459.00px;width:436.00px;height:320.00px;background:#fff;border:1px solid #e9e9e9;box-shadow:0 2px 9px rgba(0,0,0,.065);box-sizing:border-box"></div>
<span class="t" style="left:928.00px;top:478.00px;height:14px;line-height:14px;font-size:9.3px;color:#666;-webkit-text-stroke:0.32px currentColor;transform:scaleX(1.1002);">Suddivisione tickets per tipologia</span>
<svg class="b" style="left:911px;top:459px" width="436" height="309" viewBox="911 459 436 309"><circle cx="1061.9" cy="620.9" r="94.95" fill="#ffd403"/><path d="M1061.9 620.9 L1061.9 525.9499999999999 A94.95 94.95 0 0 1 1092.22 710.88 Z" fill="#2aabe3"/><circle cx="1222.0" cy="614.1" r="3.6" fill="#2aa7e0"/><circle cx="1222.0" cy="628.9" r="3.6" fill="#fdd017"/></svg>
<span class="t" style="left:1230.40px;top:609.00px;height:14px;line-height:14px;font-size:9.5px;color:#222;transform:scaleX(0.9428);">Informazione: 13 (45%)</span>
<span class="t" style="left:1230.40px;top:623.00px;height:14px;line-height:14px;font-size:9.5px;color:#222;transform:scaleX(0.9234);">Incident: 16 (55%)</span>
<div class="b" style="left:928.00px;top:736.00px;width:402.00px;height:26.70px;background:#f4f4f4;border-top:1px solid #dcdcdc;box-sizing:border-box"></div>
<span class="t" style="left:935.00px;top:742.00px;height:14px;line-height:14px;font-size:9.5px;color:#8f8f8f;transform:scaleX(0.8497);">INFINITY ZUCCHETTI - Tickets: assegnati</span>
<span class="t" style="left:1302.90px;top:742.00px;height:13px;line-height:13px;font-size:8.5px;color:#5a5a5a;transform:scaleX(0.9492);">22:37</span>
<svg class="b" style="left:1180px;top:0" width="186" height="110" viewBox="1180 0 186 110" fill="none"><path d="M1185.5 12 V41" stroke="#6ea3d6" stroke-width="1"/><path d="M1219.5 12 V41" stroke="#6ea3d6" stroke-width="1"/><path d="M1253.5 12 V41" stroke="#6ea3d6" stroke-width="1"/><path d="M1288.5 12 V41" stroke="#6ea3d6" stroke-width="1"/><path d="M1320.5 12 V41" stroke="#6ea3d6" stroke-width="1"/><rect x="1196.8" y="22.8" width="10.4" height="5.6" stroke="#fff" stroke-width="1.5"/><path d="M1199 30.3 H1205" stroke="#fff" stroke-width="1.3"/><path d="M1232.6 28.4 V25.2 a3.3 3.6 0 0 1 6.6 0 V28.4 M1231.2 28.9 H1240.6" stroke="#fff" stroke-width="1.5"/><circle cx="1235.9" cy="30.6" r="1.1" fill="#fff"/><path d="M1265.2 21.6 H1275.6 V28.6 H1269.8 L1267.3 30.7 V28.6 H1265.2 Z" stroke="#fff" stroke-width="1.4" stroke-linejoin="round"/><circle cx="1305.6" cy="24.6" r="3.6" stroke="#fff" stroke-width="1.5"/><path d="M1303 27.4 L1299.4 31" stroke="#fff" stroke-width="1.6"/><defs><clipPath id="avc"><circle cx="1344" cy="26.9" r="12"/></clipPath><linearGradient id="avh" x1="0" y1="0" x2="0" y2="1"><stop offset="0" stop-color="#ddd6d8"/><stop offset="0.3" stop-color="#c3a59d"/><stop offset="0.62" stop-color="#a87a6f"/><stop offset="1" stop-color="#7a4f49"/></linearGradient><linearGradient id="avb" x1="0" y1="0" x2="1" y2="0"><stop offset="0" stop-color="#6f8a63"/><stop offset="0.55" stop-color="#7d9570"/><stop offset="1" stop-color="#4e6a3c"/></linearGradient></defs><g clip-path="url(#avc)"><rect x="1331" y="14" width="26" height="26" fill="url(#avb)"/><path d="M1331 33 q6 -3 10 4 v4 h-10 z" fill="#6a3f42"/><path d="M1342 39.5 q3 -6.5 15 -9 v9 z" fill="#4b50b4"/><ellipse cx="1341.3" cy="26.4" rx="8.3" ry="11.6" fill="url(#avh)"/><path d="M1334.2 22.6 q3.2 -1.2 6.4 0 q3.6 -1.6 7 -0.4 l-0.4 2.8 q-2.8 1.7 -5.6 0 l-1.2 -0.8 q-2.6 2.2 -5.8 0.6 z" fill="#1c1c22"/><path d="M1337.6 31.4 q3.4 1.3 6.8 0" stroke="#8b5a55" stroke-width="0.9" fill="none"/></g><path d="M1318.54 74.50 L1319.89 75.68 L1318.72 77.71 L1317.03 77.12 L1315.81 77.82 L1315.47 79.58 L1313.13 79.58 L1312.79 77.82 L1311.57 77.12 L1309.88 77.71 L1308.71 75.68 L1310.06 74.50 L1310.06 73.10 L1308.71 71.92 L1309.88 69.89 L1311.57 70.48 L1312.79 69.78 L1313.13 68.02 L1315.47 68.02 L1315.81 69.78 L1317.03 70.48 L1318.72 69.89 L1319.89 71.92 L1318.54 73.10 Z" stroke="#6f6f6f" stroke-width="0.9" stroke-linejoin="round"/><circle cx="1314.3" cy="73.8" r="2.2" stroke="#6f6f6f" stroke-width="0.9"/><circle cx="1337.2" cy="73.8" r="5.6" stroke="#777" stroke-width="0.9"/></svg>
<span class="t" style="left:1334.93px;top:68.00px;height:13px;line-height:13px;font-size:8.5px;color:#777;">?</span>
<span class="t" style="left:1268.41px;top:20.00px;height:11px;line-height:11px;font-size:6.5px;color:#fff;font-weight:700;">?</span>
</body></html>
